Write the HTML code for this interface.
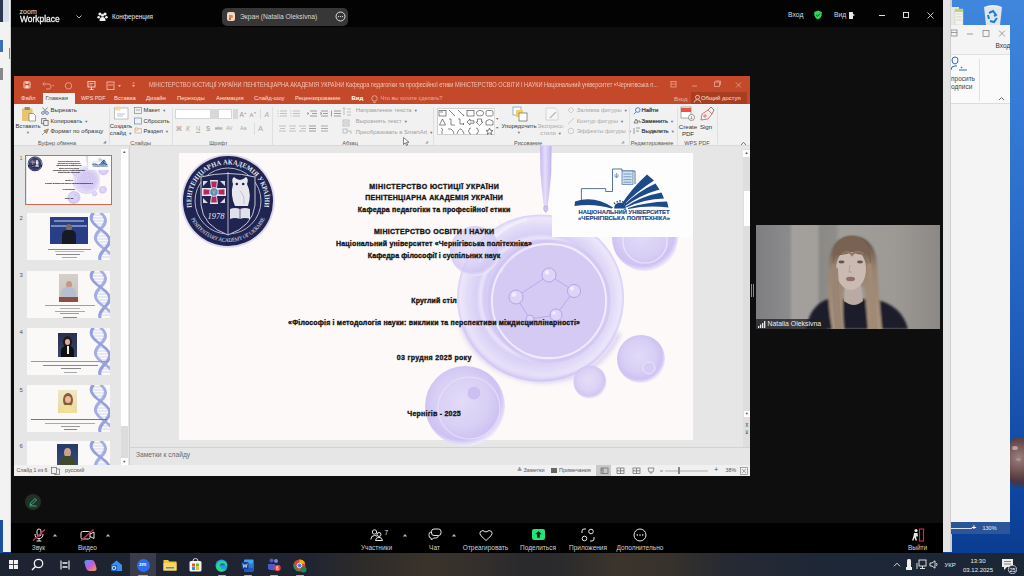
<!DOCTYPE html>
<html><head><meta charset="utf-8">
<style>
*{margin:0;padding:0;box-sizing:border-box}
html,body{width:1024px;height:576px;overflow:hidden;background:#1d5cc0;font-family:"Liberation Sans",sans-serif}
.a{position:absolute}
.t{position:absolute;white-space:nowrap;line-height:1}
/* desktop */
#desk{left:0;top:0;width:1024px;height:576px;background:linear-gradient(180deg,#3f86dc 0%,#2f73cf 30%,#1f5bb8 60%,#0e46a0 85%,#0a3a8c 100%)}
#leftwin{left:0;top:0;width:11px;height:552px;background:#f2f2f2}
#zoom{left:11px;top:0;width:932px;height:553px;background:#0e0e0e}
#ztop{left:11px;top:0;width:932px;height:27px;background:#030303}
#zbot{left:11px;top:523px;width:932px;height:30px;background:#000}
#task{left:0;top:553px;width:1024px;height:23px;background:linear-gradient(90deg,#1d2330 0%,#202432 30%,#2d2a2a 35%,#3a332b 42%,#35302b 46%,#2a2a2d 51%,#2b2b2d 55%,#3a342c 60%,#37322b 65%,#262a33 71%,#1e2736 80%,#1b2637 100%)}
/* ppt */
#ppt{left:14px;top:76px;width:736px;height:400px;background:#e6e6e6;overflow:hidden}
#ptitle{left:0;top:0;width:736px;height:28px;background:#c4492b}
#ribbon{left:0;top:28px;width:736px;height:42px;background:#f1f1f1;border-bottom:1px solid #dadada}
.tab{position:absolute;top:19px;font-size:7px;color:#fbe3dc;white-space:nowrap;line-height:1}
.rb{position:absolute;font-size:6.5px;color:#444;white-space:nowrap;line-height:1}
.rg{position:absolute;font-size:6.5px;color:#666;white-space:nowrap;line-height:1;top:63px}
.sep{position:absolute;top:31px;width:1px;height:38px;background:#dcdcdc}
#thumbs{left:0;top:70px;width:116px;height:319px;background:#e6e6e6}
#slide{left:165px;top:77px;width:514px;height:287px;background:#fcf9f8}
.st{position:absolute;font-weight:bold;color:#161616;-webkit-text-stroke:0.35px #161616;white-space:nowrap;line-height:1;font-size:8px}
#status{left:0;top:389px;width:736px;height:11px;background:#f0f0f0}
/* video */
#video{left:756px;top:225px;width:184px;height:104px;background:#7a7a7a;overflow:hidden}
/* right */
#rstrip{left:943px;top:0;width:8px;height:552px;background:#e4e4e4}
#word{left:951px;top:25px;width:59px;height:509px;background:#f4f4f4;overflow:hidden}
</style></head><body>
<div id="desk" class="a"></div>
<div id="leftwin" class="a"></div>
<div id="zoom" class="a"></div>
<div id="ztop" class="a"></div>
<div id="zbot" class="a"></div>
<div id="task" class="a"></div>
<div class="a" style="left:25px;top:494px;width:16px;height:16px;border-radius:50%;background:#23302a"></div>
<svg class="a" style="left:28px;top:497px" width="10" height="10" viewBox="0 0 10 10"><g fill="none" stroke="#35c27a" stroke-width="0.9"><path d="M2 8 L2.5 6 L7 1.5 L8.5 3 L4 7.5 Z"/><path d="M1.5 9 L8.5 9"/></g></svg>
<svg class="a" style="left:32px;top:528px" width="14" height="14" viewBox="0 0 14 14"><g fill="none" stroke="#e6e6e6" stroke-width="1"><rect x="5" y="1" width="4" height="7" rx="2"/><path d="M3 6 Q3 10.5 7 10.5 Q11 10.5 11 6 M7 10.5 L7 13 M4.5 13 L9.5 13"/></g><path d="M1 12.5 L13 1.5" stroke="#e0245e" stroke-width="1.3"/></svg>
<svg class="a" style="left:52.0px;top:532.7px" width="6" height="4" viewBox="0 0 6 4"><path d="M0.8 3.5 L3 1 L5.2 3.5 Z" fill="#b8b8b8"/></svg>
<div class="t" style="left:38.5px;top:547.5px;font-size:6.5px;color:#d2d2d2;transform:translate(-50%,-50%)">Звук</div>
<svg class="a" style="left:80px;top:528px" width="15" height="14" viewBox="0 0 15 14"><g fill="none" stroke="#e6e6e6" stroke-width="1"><rect x="1" y="3.5" width="9" height="7.5" rx="1.5"/><path d="M10 6 L14 4 L14 10.5 L10 8.5"/></g><path d="M1 12.5 L13.5 1.5" stroke="#e0245e" stroke-width="1.3"/></svg>
<svg class="a" style="left:105.0px;top:532.7px" width="6" height="4" viewBox="0 0 6 4"><path d="M0.8 3.5 L3 1 L5.2 3.5 Z" fill="#b8b8b8"/></svg>
<div class="t" style="left:87.5px;top:547.5px;font-size:6.5px;color:#d2d2d2;transform:translate(-50%,-50%)">Видео</div>
<svg class="a" style="left:370px;top:529px" width="14" height="12" viewBox="0 0 14 12"><g fill="none" stroke="#e6e6e6" stroke-width="1"><circle cx="4.5" cy="3" r="2.2"/><path d="M0.8 10.5 Q1 6.5 4.5 6.5 Q6 6.5 7 7.3"/><circle cx="9" cy="5.5" r="2"/><path d="M5.5 11.5 Q5.8 8.3 9 8.3 Q12.2 8.3 12.5 11.5 Z"/></g></svg>
<div class="t" style="left:384.5px;top:529.5px;font-size:6.5px;color:#e4e4e4">7</div>
<svg class="a" style="left:402.0px;top:532.7px" width="6" height="4" viewBox="0 0 6 4"><path d="M0.8 3.5 L3 1 L5.2 3.5 Z" fill="#b8b8b8"/></svg>
<div class="t" style="left:376.5px;top:547.5px;font-size:6.5px;color:#d2d2d2;transform:translate(-50%,-50%)">Участники</div>
<svg class="a" style="left:428px;top:528px" width="14" height="13" viewBox="0 0 14 13"><g fill="none" stroke="#e6e6e6" stroke-width="1"><rect x="3.5" y="1" width="9.5" height="6.5" rx="2.5"/><path d="M3 4 Q1 4 1 6.5 L1 7.5 Q1 10 3 10 L3.5 12 L5.5 10 L8 10 Q10 10 10.3 8"/></g></svg>
<svg class="a" style="left:450.5px;top:532.7px" width="6" height="4" viewBox="0 0 6 4"><path d="M0.8 3.5 L3 1 L5.2 3.5 Z" fill="#b8b8b8"/></svg>
<div class="t" style="left:434.5px;top:547.5px;font-size:6.5px;color:#d2d2d2;transform:translate(-50%,-50%)">Чат</div>
<svg class="a" style="left:478.5px;top:528.5px" width="14" height="13" viewBox="0 0 14 13"><path d="M7 11.5 L2 6.8 Q0 4.5 1.5 2.5 Q3.5 0.3 7 3 Q10.5 0.3 12.5 2.5 Q14 4.5 12 6.8 Z" fill="none" stroke="#e6e6e6" stroke-width="1"/></svg>
<div class="t" style="left:485.5px;top:547.5px;font-size:6.5px;color:#d2d2d2;transform:translate(-50%,-50%)">Отреагировать</div>
<div class="a" style="left:531.5px;top:529px;width:13px;height:11px;background:#2bdf78;border-radius:2px"></div>
<svg class="a" style="left:533.5px;top:530px" width="9" height="9" viewBox="0 0 9 9"><path d="M4.5 1 L1.3 4.2 L3.2 4.2 L3.2 7.8 L5.8 7.8 L5.8 4.2 L7.7 4.2 Z" fill="#0a2a14"/></svg>
<div class="t" style="left:538px;top:547.5px;font-size:6.5px;color:#d2d2d2;transform:translate(-50%,-50%)">Поделиться</div>
<svg class="a" style="left:581px;top:528px" width="14" height="14" viewBox="0 0 14 14"><g fill="none" stroke="#e6e6e6" stroke-width="1"><circle cx="10" cy="3.5" r="2.3"/><circle cx="3.5" cy="10.5" r="2.3"/><path d="M1 5 L1 3 Q1 1 3 1 L5 1 M13 9 L13 11 Q13 13 11 13 L9 13"/></g></svg>
<div class="t" style="left:588px;top:547.5px;font-size:6.5px;color:#d2d2d2;transform:translate(-50%,-50%)">Приложения</div>
<svg class="a" style="left:633px;top:528px" width="14" height="14" viewBox="0 0 14 14"><circle cx="7" cy="7" r="6" fill="none" stroke="#e6e6e6" stroke-width="1"/><g fill="#e6e6e6"><circle cx="4.3" cy="7" r="0.8"/><circle cx="7" cy="7" r="0.8"/><circle cx="9.7" cy="7" r="0.8"/></g></svg>
<div class="t" style="left:640px;top:547.5px;font-size:6.5px;color:#d2d2d2;transform:translate(-50%,-50%)">Дополнительно</div>
<svg class="a" style="left:911px;top:528px" width="14" height="14" viewBox="0 0 14 14"><rect x="8.5" y="1" width="4" height="12" fill="none" stroke="#e0245e" stroke-width="1.1"/><g fill="#e6e6e6"><circle cx="5" cy="2.5" r="1.6"/><path d="M3 5 L6.5 5 L7 8.5 L5 8.5 L6 12.5 L4.5 12.5 L3.5 9.5 L2.5 12.5 L1 12.5 L2.5 8 Z"/></g></svg>
<div class="t" style="left:917.5px;top:547.5px;font-size:6.5px;color:#d2d2d2;transform:translate(-50%,-50%)">Выйти</div>
<div class="a" style="left:130px;top:553px;width:26px;height:23px;background:rgba(255,255,255,0.12)"></div>
<svg class="a" style="left:8.8px;top:560.3px" width="9" height="9" viewBox="0 0 9 9"><g fill="#f2f2f2"><rect x="0" y="0" width="4.1" height="4.1"/><rect x="4.9" y="0" width="4.1" height="4.1"/><rect x="0" y="4.9" width="4.1" height="4.1"/><rect x="4.9" y="4.9" width="4.1" height="4.1"/></g></svg>
<svg class="a" style="left:31px;top:558px" width="13" height="13" viewBox="0 0 13 13"><circle cx="7.5" cy="5.5" r="4.2" fill="none" stroke="#f2f2f2" stroke-width="1.3"/><path d="M4.5 8.5 L1 12" stroke="#f2f2f2" stroke-width="1.5"/></svg>
<svg class="a" style="left:59.5px;top:560px" width="10" height="10" viewBox="0 0 10 10"><g fill="none" stroke="#f2f2f2" stroke-width="1.1"><path d="M1 0.5 L1 9.5 M9 0.5 L9 9.5"/><path d="M2.5 3 L7.5 3 M2.5 7 L7.5 7" stroke-width="1.6"/></g></svg>
<svg class="a" style="left:84px;top:558.5px" width="13" height="13" viewBox="0 0 13 13"><defs><linearGradient id="cop" x1="0" y1="0" x2="1" y2="1"><stop offset="0" stop-color="#3aa0ff"/><stop offset="0.5" stop-color="#c85bd9"/><stop offset="1" stop-color="#f7a23a"/></linearGradient></defs><path d="M3 1 L8 1 Q10 1 11 4 L12.5 9 Q13 12 10 12 L5 12 Q3 12 2 9 L0.5 4 Q0 1 3 1 Z" fill="url(#cop)"/></svg>
<svg class="a" style="left:110px;top:558.5px" width="13" height="13" viewBox="0 0 13 13"><path d="M1 6 L6.5 1.5 L12 6 L12 12 L1 12 Z" fill="#3c8ee6"/><rect x="1" y="6" width="6" height="6" fill="#1462c8"/><circle cx="4" cy="9" r="1.8" fill="none" stroke="#fff" stroke-width="0.8"/></svg>
<div class="a" style="left:137px;top:558.5px;width:13px;height:13px;border-radius:50%;background:#2d6df0"></div><div class="t" style="left:139.3px;top:562px;font-size:5px;color:#fff;font-weight:bold">zm</div>
<svg class="a" style="left:163px;top:559px" width="14" height="12" viewBox="0 0 14 12"><path d="M0.5 1 L5 1 L6.5 2.5 L13.5 2.5 L13.5 11.5 L0.5 11.5 Z" fill="#f3c440"/><rect x="0.5" y="4" width="13" height="7.5" fill="#ffd75e"/><rect x="3" y="8" width="8" height="1.5" fill="#3a8ee6"/></svg>
<svg class="a" style="left:189px;top:558px" width="13" height="14" viewBox="0 0 13 14"><path d="M4 3 Q4 0.5 6.5 0.5 Q9 0.5 9 3" fill="none" stroke="#ddd" stroke-width="1"/><rect x="0.5" y="3" width="12" height="10.5" rx="1.5" fill="#f4f4f4"/><rect x="3" y="5.5" width="3" height="3" fill="#f25022"/><rect x="7" y="5.5" width="3" height="3" fill="#7fba00"/><rect x="3" y="9" width="3" height="3" fill="#00a4ef"/><rect x="7" y="9" width="3" height="3" fill="#ffb900"/></svg>
<svg class="a" style="left:215px;top:558.5px" width="13" height="13" viewBox="0 0 13 13"><circle cx="6.5" cy="6.5" r="6" fill="#1ea0db"/><path d="M1 8 Q2 2 7 2 Q12 2 12.3 6.5 L5 6.5 Q5 10 9 10.5 Q11 10.5 12 9.5 Q10 12.8 6.5 12.8 Q2 12.5 1 8 Z" fill="#2fd38a"/><path d="M4.5 6.5 Q5 4 8 4.2 Q10 4.5 10.2 6.5 Z" fill="#0d6fb8"/></svg>
<svg class="a" style="left:241px;top:558.5px" width="13" height="13" viewBox="0 0 13 13"><rect x="3" y="0.5" width="9.5" height="12" rx="1" fill="#41a5ee"/><rect x="3" y="4.5" width="9.5" height="4" fill="#2b7cd3"/><rect x="3" y="8.5" width="9.5" height="4" fill="#185abd"/><rect x="0.5" y="3" width="7" height="7" rx="0.8" fill="#103f91"/><path d="M1.8 4.5 L2.8 8.5 L4 5.5 L5.2 8.5 L6.2 4.5" stroke="#fff" stroke-width="0.7" fill="none"/></svg>
<svg class="a" style="left:267px;top:558px" width="14" height="14" viewBox="0 0 14 14"><circle cx="9" cy="3" r="2" fill="#7b83eb"/><circle cx="4.5" cy="2.5" r="2" fill="#5059c9"/><path d="M1 6 L8 6 L8 12 Q4.5 13 1 11 Z" fill="#5059c9"/><circle cx="10.5" cy="10" r="3.3" fill="#e13e3e"/><text x="10.5" y="12" font-size="5" text-anchor="middle" fill="#fff" font-family="Liberation Sans">6</text></svg>
<svg class="a" style="left:293px;top:558.5px" width="14" height="14" viewBox="0 0 14 14"><circle cx="6.5" cy="6.5" r="6" fill="#db4437"/><path d="M6.5 0.5 A6 6 0 0 1 12.2 4.8 L6.5 4.8 Z" fill="#f4b400"/><path d="M0.8 4.5 L4 10 L6.5 12.5 A6 6 0 0 1 0.8 4.5 Z" fill="#0f9d58"/><circle cx="6.5" cy="6.5" r="2.4" fill="#4285f4" stroke="#fff" stroke-width="0.8"/><circle cx="10.5" cy="10.5" r="3" fill="#1a8a5a"/></svg>
<div class="a" style="left:138.0px;top:574.5px;width:10px;height:1.5px;background:#aab;border-radius:1px"></div>
<div class="a" style="left:217.5px;top:574.5px;width:8px;height:1.5px;background:#aab;border-radius:1px"></div>
<div class="a" style="left:243.5px;top:574.5px;width:8px;height:1.5px;background:#aab;border-radius:1px"></div>
<div class="a" style="left:270.0px;top:574.5px;width:8px;height:1.5px;background:#aab;border-radius:1px"></div>
<div class="a" style="left:296.0px;top:574.5px;width:8px;height:1.5px;background:#aab;border-radius:1px"></div>
<svg class="a" style="left:893px;top:562px" width="8" height="5" viewBox="0 0 8 5"><path d="M1 4.3 L4 1.2 L7 4.3" stroke="#eee" stroke-width="0.9" fill="none"/></svg>
<div class="a" style="left:907px;top:558.5px;width:4px;height:8px;background:#eee;border-radius:1.5px 1.5px 0 0"></div><div class="a" style="left:906px;top:566.5px;width:6px;height:3px;background:#eee"></div>
<svg class="a" style="left:916px;top:559px" width="11" height="11" viewBox="0 0 11 11"><g fill="none" stroke="#eee" stroke-width="0.9"><rect x="3" y="1" width="7" height="6"/><path d="M6.5 7 L6.5 9.5 M4 9.5 L9 9.5 M1 4 L1 10"/></g></svg>
<svg class="a" style="left:929px;top:560px" width="10" height="9" viewBox="0 0 10 9"><g fill="none" stroke="#eee" stroke-width="0.9"><path d="M1 3 L3 3 L6 0.8 L6 8.2 L3 6 L1 6 Z"/><path d="M7.5 3 Q8.5 4.5 7.5 6"/></g></svg>
<div class="t" style="left:944.5px;top:562px;font-size:6px;color:#eee">УКР</div>
<div class="t" style="left:978px;top:560.5px;font-size:6px;color:#eee;transform:translate(-50%,-50%)">13:30</div>
<div class="t" style="left:978px;top:569.5px;font-size:6px;color:#eee;transform:translate(-50%,-50%)">03.12.2025</div>
<svg class="a" style="left:1001px;top:558px" width="16" height="16" viewBox="0 0 16 16"><path d="M1 1 L12 1 L12 9 L6 9 L3 12 L3 9 L1 9 Z" fill="#eee"/><path d="M3 3.5 L10 3.5 M3 6 L10 6" stroke="#555" stroke-width="0.7"/><circle cx="11.5" cy="11.5" r="4.2" fill="#2a3040" stroke="#eee" stroke-width="0.7"/><text x="11.5" y="13.6" font-size="5.5" text-anchor="middle" fill="#fff" font-family="Liberation Sans">25</text></svg>

<!-- zoom top bar -->
<div class="t" style="left:19.5px;top:7.8px;font-size:7px;color:#eee;letter-spacing:0.1px">zoom</div>
<div class="t" style="left:19.5px;top:14.3px;font-size:9.6px;color:#f4f4f4;transform:scaleX(0.88);transform-origin:0 0;-webkit-text-stroke:0.3px #f4f4f4">Workplace</div>
<svg class="a" style="left:75px;top:14px" width="8" height="6" viewBox="0 0 8 6"><path d="M1.5 1.5 L4 4 L6.5 1.5" stroke="#bbb" stroke-width="1" fill="none"/></svg>
<svg class="a" style="left:97px;top:11px" width="11" height="11" viewBox="0 0 11 11"><g fill="#f0f0f0"><circle cx="3" cy="3" r="1.6"/><circle cx="8" cy="3" r="1.6"/><circle cx="5.5" cy="4.2" r="1.5"/><circle cx="1.6" cy="6.3" r="1.3"/><circle cx="9.4" cy="6.3" r="1.3"/><path d="M2.5 10 Q2.5 6 5.5 6 Q8.5 6 8.5 10 Z"/></g></svg>
<div class="t" style="left:112px;top:14px;font-size:6.4px;color:#e8e8e8">Конференция</div>
<div class="a" style="left:222px;top:8px;width:126px;height:18px;background:#373737;border-radius:5px"></div>
<div class="a" style="left:226.5px;top:12.3px;width:8.6px;height:9px;background:#f1d6c2;border-radius:2px"></div>
<div class="a" style="left:229px;top:15px;width:2px;height:5px;background:#c8653e"></div><div class="a" style="left:229px;top:15px;width:4px;height:3px;background:#d9875f;border-radius:0 1.5px 1.5px 0"></div>
<div class="t" style="left:240px;top:14px;font-size:6.7px;color:#d8d8d8">Экран (Natalia Oleksivna)</div>
<svg class="a" style="left:335px;top:11px" width="11" height="11" viewBox="0 0 11 11"><circle cx="5.5" cy="5.5" r="4.5" stroke="#eee" stroke-width="0.9" fill="none"/><circle cx="3.5" cy="5.6" r="0.6" fill="#eee"/><circle cx="5.5" cy="5.6" r="0.6" fill="#eee"/><circle cx="7.5" cy="5.6" r="0.6" fill="#eee"/></svg>
<div class="t" style="left:788px;top:12px;font-size:6.8px;color:#ddd">Вход</div>
<svg class="a" style="left:813px;top:10px" width="10" height="10" viewBox="0 0 10 10"><path d="M5 0.6 L8.8 2 L8.6 5.5 Q8 8.2 5 9.6 Q2 8.2 1.4 5.5 L1.2 2 Z" fill="#2ed35a"/><path d="M3.2 5 L4.5 6.3 L6.9 3.8" stroke="#0b3d17" stroke-width="1" fill="none"/></svg>
<div class="t" style="left:834px;top:12px;font-size:6.8px;color:#ddd">Вид</div>
<div class="a" style="left:849px;top:12px;width:4px;height:7px;background:#e8e8e8;border-radius:0.5px"></div>
<div class="a" style="left:853px;top:14px;width:0;height:0;border-top:1.5px solid transparent;border-bottom:1.5px solid transparent;border-left:2px solid #e8e8e8"></div>
<div class="a" style="left:879px;top:15px;width:6px;height:1px;background:#ddd"></div>
<div class="a" style="left:903px;top:12px;width:6px;height:6px;border:1px solid #ddd"></div>
<svg class="a" style="left:927px;top:12px" width="7" height="7" viewBox="0 0 7 7"><path d="M0.5 0.5 L6.5 6.5 M6.5 0.5 L0.5 6.5" stroke="#ddd" stroke-width="0.9"/></svg>


<div id="ppt" class="a">
  <div id="ptitle" class="a"></div>

<svg class="a" style="left:8px;top:4px" width="130" height="11" viewBox="0 0 130 11">
 <g fill="none" stroke="#f8ddd4" stroke-width="0.9">
  <rect x="2" y="1.8" width="6" height="6.2" rx="0.6" fill="none" stroke="#f8ddd4"/><rect x="3.5" y="1.8" width="3" height="2" fill="#f8ddd4" stroke="none"/><rect x="3.3" y="5.2" width="3.4" height="2.8" fill="#f8ddd4" stroke="none"/>
  <path d="M21 4 L27 4 Q29 4 29 6.5 Q29 9 27 9 L24 9" stroke="#e9a58f"/>
  <path d="M22.5 2.3 L20.8 4 L22.5 5.7" stroke="#e9a58f"/>
  <path d="M30.5 5.5 L32 5.5" stroke="#e9a58f"/>
  <circle cx="46.5" cy="5.8" r="3.2" stroke="#e9a58f"/>
  <rect x="66" y="1.5" width="7" height="5.5" fill="none" stroke="#f8ddd4"/><path d="M67.5 3.5 L71.5 3.5 M67.5 5 L70 5" stroke="#f8ddd4" stroke-width="0.6"/>
  <path d="M69.5 7 L69.5 9.5 M67.5 9.5 L71.5 9.5" stroke="#f8ddd4"/>
  <rect x="85" y="2" width="7" height="7.5" stroke="#f0bba9"/>
  <path d="M86 5 L91 5" stroke="#f0bba9"/>
  <path d="M96 5 L99 5 L97.5 7 Z" fill="#f0bba9" stroke="none"/>
  <path d="M110 5 L113 5 L111.5 7 Z" fill="#f0bba9" stroke="none"/>
  <path d="M110.5 3 L112.5 3" stroke="#f0bba9"/>
 </g>
</svg>
<div class="t" style="left:135px;top:6.3px;font-size:6.3px;color:#f1c2b2;letter-spacing:-0.05px;transform:scaleX(0.903);transform-origin:0 0">МІНІСТЕРСТВО ЮСТИЦІЇ УКРАЇНИ ПЕНІТЕНЦІАРНА АКАДЕМІЯ УКРАЇНИ Кафедра педагогіки та професійної етики МІНІСТЕРСТВО ОСВІТИ І НАУКИ Національний університет «Чернігівська п...</div>
<svg class="a" style="left:652px;top:3px" width="84" height="11" viewBox="0 0 84 11">
 <g fill="none" stroke="#e6a794" stroke-width="0.8">
  <rect x="5" y="2.5" width="5" height="5.5"/><path d="M5 5 L10 5"/>
  <path d="M26 7 L31 7"/>
  <rect x="48.5" y="3" width="5" height="4.5"/><path d="M49.5 2 L54.5 2 L54.5 6"/>
  <path d="M70 3.5 L75 8.5 M75 3.5 L70 8.5"/>
 </g>
</svg>
<div class="a" style="left:676.5px;top:16px;width:56px;height:12px;background:#a93d22"></div>
<svg class="a" style="left:679px;top:17.5px" width="9" height="9" viewBox="0 0 10 10"><g fill="none" stroke="#f5d5ca" stroke-width="0.9"><circle cx="5" cy="3.6" r="2.2"/><path d="M1.3 9.5 Q1.5 6.3 5 6.3 Q8.5 6.3 8.7 9.5"/></g></svg>
<div class="t" style="left:687px;top:19.5px;font-size:5.9px;color:#f8e2da">Общий доступ</div>
<div class="t" style="left:660px;top:19.5px;font-size:6px;color:#f0b4a2">Вход</div>

<div class="a" style="left:29px;top:16.5px;width:32px;height:11.5px;background:#f1f1f1"></div>
<div class="tab" style="left:7px;color:#fbe0d7;font-size:5.9px;top:20px">Файл</div>
<div class="tab" style="left:31.5px;color:#444;font-size:5.9px;top:20px">Главная</div>
<div class="tab" style="left:67px;color:#fbe0d7;font-size:5.4px;top:20.3px">WPS PDF</div>
<div class="tab" style="left:100px;color:#fbe0d7;font-size:5.9px;top:20px">Вставка</div>
<div class="tab" style="left:132px;color:#fbe0d7;font-size:5.9px;top:20px">Дизайн</div>
<div class="tab" style="left:163px;color:#fbe0d7;font-size:5.9px;top:20px">Переходы</div>
<div class="tab" style="left:202px;color:#fbe0d7;font-size:5.9px;top:20px">Анимация</div>
<div class="tab" style="left:240px;color:#fbe0d7;font-size:5.9px;top:20px">Слайд-шоу</div>
<div class="tab" style="left:281px;color:#fbe0d7;font-size:5.9px;top:20px">Рецензирование</div>
<div class="tab" style="left:337.5px;top:20px;font-size:5.9px;color:#fff;font-weight:bold">Вид</div>
<svg class="a" style="left:357px;top:18.5px" width="7" height="9" viewBox="0 0 7 9"><g fill="none" stroke="#efb09c" stroke-width="0.8"><path d="M2 6 Q0.6 4.6 0.8 3.2 Q1 0.7 3.5 0.7 Q6 0.7 6.2 3.2 Q6.4 4.6 5 6 Z"/><path d="M2.3 7.6 L4.7 7.6"/></g></svg>
<div class="tab" style="left:366.5px;top:20px;font-size:5.6px;color:#efb09c">Что вы хотите сделать?</div>
  <div id="ribbon" class="a"></div>
<svg class="a" style="left:7px;top:30px" width="16" height="16" viewBox="0 0 16 16"><rect x="1" y="2.5" width="10.5" height="12.5" rx="1" fill="#e8c46f"/><rect x="3.5" y="1" width="5.5" height="3" rx="0.8" fill="#9a8a6a"/><path d="M8 7.5 L12.5 7.5 L14.5 9.5 L14.5 15 L8 15 Z" fill="#fff" stroke="#666" stroke-width="0.6"/></svg>
<div class="t" style="left:14px;top:51px;font-size:5.9px;color:#333;transform:translate(-50%,-50%);">Вставить</div>
<div class="t" style="left:14px;top:57.5px;font-size:3.8px;color:#777;transform:translate(-50%,-50%);">▼</div>
<svg class="a" style="left:27px;top:31px" width="8" height="8" viewBox="0 0 8 8"><g fill="none" stroke="#5b6f8e" stroke-width="0.8"><circle cx="2" cy="6" r="1.4"/><circle cx="6" cy="6" r="1.4"/><path d="M2.8 4.9 L6.5 0.5 M5.2 4.9 L1.5 0.5"/></g></svg>
<div class="t" style="left:36.5px;top:35px;font-size:5.9px;color:#333;transform:translateY(-50%);">Вырезать</div>
<svg class="a" style="left:27px;top:41.5px" width="8" height="8" viewBox="0 0 8 8"><g fill="none" stroke="#555" stroke-width="0.7"><rect x="0.7" y="0.7" width="4.3" height="5"/><rect x="2.8" y="2.6" width="4.3" height="5" fill="#f1f1f1"/></g></svg>
<div class="t" style="left:36.5px;top:46px;font-size:5.9px;color:#333;transform:translateY(-50%);">Копировать<span style="font-size:4px;color:#777;margin-left:2px">▼</span></div>
<svg class="a" style="left:27px;top:52px" width="8" height="8" viewBox="0 0 8 8"><path d="M1 7 L4 4 L5.5 5.5 L7.5 1 L3 2.5 L4 4" fill="#c9a241" stroke="#555" stroke-width="0.5"/></svg>
<div class="t" style="left:36.5px;top:56.3px;font-size:5.9px;color:#333;transform:translateY(-50%);">Формат по образцу</div>
<div class="t" style="left:43px;top:67.5px;font-size:5.6px;color:#555;transform:translate(-50%,-50%);">Буфер обмена</div>
<div class="t" style="left:89px;top:64px;font-size:4px;color:#888">◢</div>
<div class="a" style="left:94.5px;top:31px;width:1px;height:38px;background:#e0e0e0"></div>
<svg class="a" style="left:100px;top:30px" width="15" height="15" viewBox="0 0 15 15"><rect x="0.5" y="2" width="13.5" height="11" fill="#fff" stroke="#999" stroke-width="0.6"/><rect x="1.5" y="0.5" width="5" height="4" fill="#f3d8a7"/><path d="M3 8 L11 8 M3 10 L9 10" stroke="#9ab" stroke-width="0.7"/></svg>
<div class="t" style="left:107px;top:51px;font-size:5.9px;color:#333;transform:translate(-50%,-50%);">Создать</div>
<div class="t" style="left:107px;top:58px;font-size:5.9px;color:#333;transform:translate(-50%,-50%);">слайд<span style="font-size:4px;color:#777;margin-left:2px">▼</span></div>
<svg class="a" style="left:120px;top:31px" width="8" height="30" viewBox="0 0 8 30"><g fill="none" stroke="#777" stroke-width="0.6"><rect x="0.5" y="0.5" width="7" height="6"/><path d="M2 3 L6 3"/><rect x="0.5" y="11" width="7" height="6" stroke="#5575a5"/><path d="M1 21 L4 21 L4 23 L1 23 Z M4.5 21.5 L7.5 21.5 L7.5 26 L1 26 L1 23" stroke="#c9a06a"/></g></svg>
<div class="t" style="left:129.5px;top:35px;font-size:5.9px;color:#333;transform:translateY(-50%);">Макет<span style="font-size:4px;color:#777;margin-left:2px">▼</span></div>
<div class="t" style="left:129.5px;top:46px;font-size:5.9px;color:#333;transform:translateY(-50%);">Сбросить</div>
<div class="t" style="left:129.5px;top:56.3px;font-size:5.9px;color:#333;transform:translateY(-50%);">Раздел<span style="font-size:4px;color:#777;margin-left:2px">▼</span></div>
<div class="t" style="left:126.6px;top:67.5px;font-size:5.6px;color:#555;transform:translate(-50%,-50%);">Слайды</div>
<div class="a" style="left:158px;top:31px;width:1px;height:38px;background:#e0e0e0"></div>
<div class="a" style="left:160.7px;top:33.4px;width:36.7px;height:10px;background:#fff;border:0.5px solid #d6d6d6"></div>
<div class="a" style="left:197.4px;top:33.4px;width:6.3px;height:10px;background:#d8d8d8"></div>
<div class="a" style="left:203.7px;top:33.4px;width:14.8px;height:10px;background:#fff;border:0.5px solid #d6d6d6"></div>
<div class="a" style="left:218.5px;top:33.4px;width:5.5px;height:10px;background:#d8d8d8"></div>
<div class="t" style="left:225.5px;top:38.5px;font-size:6.5px;color:#999;transform:translateY(-50%);">A<sup style='font-size:3px'>▲</sup></div>
<div class="t" style="left:235.5px;top:38.5px;font-size:6px;color:#999;transform:translateY(-50%);">A<sup style='font-size:3px'>▼</sup></div>
<div class="a" style="left:245.5px;top:33px;width:1px;height:10px;background:#dcdcdc"></div>
<div class="t" style="left:250.5px;top:38.5px;font-size:6.8px;color:#aaa;transform:translateY(-50%);"><i>A</i></div>
<div class="t" style="left:162px;top:53px;font-size:6.4px;color:#aaa;transform:translateY(-50%);font-weight:bold">Ж</div>
<div class="t" style="left:172px;top:53px;font-size:6.4px;color:#aaa;transform:translateY(-50%);font-style:italic">К</div>
<div class="t" style="left:182px;top:53px;font-size:6.4px;color:#aaa;transform:translateY(-50%);text-decoration:underline">Ч</div>
<div class="t" style="left:192px;top:53px;font-size:6.4px;color:#aaa;transform:translateY(-50%);font-weight:bold">S</div>
<div class="t" style="left:201px;top:53px;font-size:6.4px;color:#aaa;transform:translateY(-50%);text-decoration:line-through;font-size:4.6px">abc</div>
<div class="t" style="left:212px;top:53px;font-size:6.4px;color:#aaa;transform:translateY(-50%);font-size:5.2px">AV</div>
<div class="t" style="left:226px;top:53px;font-size:6.4px;color:#aaa;transform:translateY(-50%);font-size:5.4px">Aa</div>
<div class="a" style="left:240px;top:47px;width:1px;height:12px;background:#dcdcdc"></div>
<div class="t" style="left:244px;top:53px;font-size:7.5px;color:#aaa;transform:translateY(-50%);">A</div>
<div class="t" style="left:204.4px;top:67.5px;font-size:5.6px;color:#555;transform:translate(-50%,-50%);">Шрифт</div>
<div class="a" style="left:258px;top:31px;width:1px;height:38px;background:#e0e0e0"></div>
<svg class="a" style="left:263px;top:33px" width="70" height="25" viewBox="0 0 70 25"><g stroke="#b5b5b5" stroke-width="0.8" fill="none"><path d="M3 2 L10 2 M3 4.5 L10 4.5 M3 7 L10 7 M0.5 2 L1.5 2 M0.5 4.5 L1.5 4.5 M0.5 7 L1.5 7"/><path d="M16 2 L23 2 M16 4.5 L23 4.5 M16 7 L23 7 M13.5 2 L14.5 2 M13.5 4.5 L14.5 4.5 M13.5 7 L14.5 7"/><path d="M33 2 L40 2 M35 4.5 L40 4.5 M33 7 L40 7 M30 3.5 L32 4.5 L30 5.5" stroke="#888"/><path d="M44 2 L51 2 M46 4.5 L51 4.5 M44 7 L51 7 M43 3.5 L45 4.5 L43 5.5" stroke="#888"/><path d="M57 2 L64 2 M57 4.5 L64 4.5 M57 7 L64 7 M54.5 1.5 L54.5 7.5" stroke="#888"/><path d="M2 17 L9 17 M3 19.5 L8 19.5 M2 22 L9 22"/><path d="M12 17 L19 17 M13 19.5 L18 19.5 M12 22 L19 22"/><path d="M22 17 L29 17 M24 19.5 L29 19.5 M22 22 L29 22"/><path d="M32 17 L39 17 M32 19.5 L39 19.5 M32 22 L39 22" stroke="#888"/><path d="M44 17 L51 17 M44 19.5 L51 19.5 M44 22 L51 22" stroke="#999"/></g></svg>
<svg class="a" style="left:328px;top:31px" width="10" height="30" viewBox="0 0 10 30"><g fill="none" stroke="#aaa" stroke-width="0.7"><path d="M2 1 L2 8 M0.5 2 L2 0.5 L3.5 2 M5 2 L9 2 M5 5 L9 5 M5 8 L9 8"/><rect x="1" y="13" width="6" height="6"/><path d="M2 15 L6 15 M2 17 L6 17"/><rect x="1" y="22" width="4" height="4"/><path d="M5 24 L9 24 L9 27"/></g></svg>
<div class="t" style="left:341.8px;top:35px;font-size:5.9px;color:#a0a0a0;transform:translateY(-50%);">Направление текста<span style="font-size:4px;color:#777;margin-left:2px">▼</span></div>
<div class="t" style="left:341.8px;top:46px;font-size:5.9px;color:#a0a0a0;transform:translateY(-50%);">Выровнять текст<span style="font-size:4px;color:#777;margin-left:2px">▼</span></div>
<div class="t" style="left:341.8px;top:57px;font-size:5.9px;color:#a0a0a0;transform:translateY(-50%);">Преобразовать в SmartArt<span style="font-size:4px;color:#777;margin-left:2px">▼</span></div>
<div class="t" style="left:336px;top:67.5px;font-size:5.6px;color:#555;transform:translate(-50%,-50%);">Абзац</div>
<svg class="a" style="left:389px;top:61px" width="7" height="9" viewBox="0 0 7 9"><path d="M0.5 0.5 L0.5 7.5 L2.3 5.8 L3.5 8.5 L4.6 8 L3.5 5.3 L6 5.3 Z" fill="#fff" stroke="#333" stroke-width="0.6"/></svg>
<div class="t" style="left:411px;top:64px;font-size:4px;color:#aaa">◢</div>
<div class="a" style="left:419px;top:31px;width:1px;height:38px;background:#e0e0e0"></div>
<div class="a" style="left:423px;top:31.8px;width:62.4px;height:27.2px;background:#fff;border:0.5px solid #d0d0d0"></div>
<svg class="a" style="left:424px;top:32.5px" width="56" height="26" viewBox="0 0 56 26"><g fill="none" stroke="#555" stroke-width="0.7"><rect x="1" y="1.5" width="7" height="5.5"/><path d="M2 3 L5 3"/><path d="M11 1 L17 7"/><path d="M20 1 L26 7 L25 5.5"/><rect x="29" y="1.5" width="7" height="5.5"/><ellipse cx="42" cy="4.2" rx="3.6" ry="2.8"/><rect x="48" y="1.5" width="7" height="5.5" rx="1.5"/><path d="M1.5 16 L4.5 10 L7.5 16 Z"/><path d="M11 10 L13 10 L13 16 L17 16"/><path d="M20 10 L22 10 L22 15 L26 15 M25 14 L26 15 L25 16"/><path d="M29 13 L32 10 L32 11.8 L36 11.8 L36 14.2 L32 14.2 L32 16 Z"/><path d="M39.5 10 L43.5 10 L43.5 13 L45 13 L41.5 16.5 L38 13 L39.5 13 Z"/><path d="M48 16 L48 12 Q51 9 55 12 L55 16 Z"/><path d="M3 19 Q6 20 4 22 L4 25"/><path d="M10 20 Q15 19 16 25"/><path d="M19 25 Q21 19 23 20 Q25 21 26 25"/><path d="M33 19 Q31 19 31 21 Q30 22 31 23 Q31 25 33 25"/><path d="M38 19 Q40 19 40 21 Q41 22 40 23 Q40 25 38 25"/><path d="M51.5 19 L52.5 21.3 L55 21.5 L53 23 L53.8 25.5 L51.5 24 L49.2 25.5 L50 23 L48 21.5 L50.5 21.3 Z"/></g></svg>
<div class="a" style="left:480px;top:31.8px;width:5.4px;height:27.2px;background:#f4f4f4;border-left:0.5px solid #ddd"></div>
<div class="t" style="left:481.5px;top:42px;font-size:3.5px;color:#666">▼</div>
<div class="t" style="left:481.5px;top:51px;font-size:3.5px;color:#666">▼</div>
<svg class="a" style="left:498px;top:30px" width="16" height="16" viewBox="0 0 16 16"><rect x="1" y="1" width="8" height="8" fill="#fff" stroke="#6d8fc9" stroke-width="0.7"/><rect x="4" y="4" width="7" height="7" fill="#f3cf6b"/><rect x="7" y="7" width="8" height="8" fill="#fff" stroke="#666" stroke-width="0.7"/></svg>
<div class="t" style="left:505px;top:51px;font-size:5.9px;color:#333;transform:translate(-50%,-50%);">Упорядочить</div>
<div class="t" style="left:505px;top:57.5px;font-size:3.8px;color:#777;transform:translate(-50%,-50%);">▼</div>
<svg class="a" style="left:530px;top:30px" width="16" height="16" viewBox="0 0 16 16"><path d="M2 2 L11 2 L14 5 L14 14 L2 14 Z" fill="#f6f6f6" stroke="#c6c6c6" stroke-width="0.7"/><path d="M6 12 L12 6" stroke="#bbb" stroke-width="1.4"/></svg>
<div class="t" style="left:537px;top:51px;font-size:5.9px;color:#a8a8a8;transform:translate(-50%,-50%);">Экспресс-</div>
<div class="t" style="left:537px;top:58px;font-size:5.9px;color:#a8a8a8;transform:translate(-50%,-50%);">стили<span style="font-size:4px;color:#777;margin-left:2px">▼</span></div>
<svg class="a" style="left:553px;top:31px" width="8" height="30" viewBox="0 0 8 30"><g fill="none" stroke="#bbb" stroke-width="0.7"><path d="M1 3 L4 0.5 L7 3 L4 6 Z"/><path d="M1 17 L6 12"/><path d="M7 12 L6 11"/><circle cx="4" cy="24" r="2.8"/></g></svg>
<div class="t" style="left:562.7px;top:35px;font-size:5.9px;color:#a8a8a8;transform:translateY(-50%);">Заливка фигуры<span style="font-size:4px;color:#777;margin-left:2px">▼</span></div>
<div class="t" style="left:562.7px;top:45.5px;font-size:5.9px;color:#a8a8a8;transform:translateY(-50%);">Контур фигуры<span style="font-size:4px;color:#777;margin-left:2px">▼</span></div>
<div class="t" style="left:562.7px;top:55.5px;font-size:5.9px;color:#a8a8a8;transform:translateY(-50%);">Эффекты фигуры<span style="font-size:4px;color:#777;margin-left:2px">▼</span></div>
<div class="t" style="left:514px;top:67.5px;font-size:5.6px;color:#555;transform:translate(-50%,-50%);">Рисование</div>
<div class="t" style="left:607px;top:64px;font-size:4px;color:#aaa">◢</div>
<div class="a" style="left:615px;top:31px;width:1px;height:38px;background:#e0e0e0"></div>
<svg class="a" style="left:619px;top:31px" width="8" height="30" viewBox="0 0 8 30"><g fill="none" stroke-width="0.8"><circle cx="4.8" cy="3" r="2.3" stroke="#2f6dc7"/><path d="M3.2 4.8 L0.8 7.2" stroke="#2f6dc7"/><path d="M1 16 L3 12 L5 16 Z M4 14 L7 14 L7 16" stroke="#666"/><path d="M1 21 L1 27 M3 21 L7 21 M3 24 L6 24" stroke="#888"/></g></svg>
<div class="t" style="left:627.5px;top:35px;font-size:5.9px;color:#333;transform:translateY(-50%);"><b style='font-weight:normal;-webkit-text-stroke:0.2px #333'>Найти</b></div>
<div class="t" style="left:627.5px;top:45.5px;font-size:5.9px;color:#444;transform:translateY(-50%);"><b style='font-weight:normal;-webkit-text-stroke:0.2px #333'>Заменить</b><span style="font-size:4px;color:#777;margin-left:2px">▼</span></div>
<div class="t" style="left:627.5px;top:55.5px;font-size:5.9px;color:#444;transform:translateY(-50%);"><b style='font-weight:normal;-webkit-text-stroke:0.2px #333'>Выделить</b><span style="font-size:4px;color:#777;margin-left:2px">▼</span></div>
<div class="t" style="left:638px;top:67.5px;font-size:5.6px;color:#555;transform:translate(-50%,-50%);">Редактирование</div>
<div class="a" style="left:662.5px;top:31px;width:1px;height:38px;background:#e0e0e0"></div>
<svg class="a" style="left:666px;top:30px" width="16" height="16" viewBox="0 0 16 16"><rect x="1" y="1" width="10" height="11" fill="#fff" stroke="#777" stroke-width="0.6"/><rect x="1" y="2" width="10" height="4" fill="#e8534a"/><circle cx="11.5" cy="11.5" r="3" fill="#fff" stroke="#555" stroke-width="0.6"/><path d="M11.5 10 L11.5 13 M10.3 12 L11.5 13 L12.7 12" stroke="#555" stroke-width="0.5" fill="none"/></svg>
<svg class="a" style="left:685px;top:30px" width="16" height="16" viewBox="0 0 16 16"><g fill="none" stroke="#d9544f" stroke-width="0.8"><path d="M2 14 L3 8 L9 4 L13 8 L9 13 Z"/><path d="M9 4 L12 1 L15 4 L13 8" stroke="#666"/><circle cx="6" cy="10" r="1.2"/></g></svg>
<div class="t" style="left:674px;top:50.7px;font-size:6.1px;color:#333;transform:translate(-50%,-50%);">Create</div>
<div class="t" style="left:674px;top:58px;font-size:6.1px;color:#333;transform:translate(-50%,-50%);">PDF</div>
<div class="t" style="left:692px;top:50.7px;font-size:6.1px;color:#333;transform:translate(-50%,-50%);">Sign</div>
<div class="t" style="left:683px;top:67.5px;font-size:5.6px;color:#555;transform:translate(-50%,-50%);">WPS PDF</div>
<div class="a" style="left:702.5px;top:31px;width:1px;height:38px;background:#e0e0e0"></div>
<svg class="a" style="left:725.5px;top:64.5px" width="7" height="5" viewBox="0 0 7 5"><path d="M1 4 L3.5 1.3 L6 4" stroke="#666" stroke-width="0.9" fill="none"/></svg>
  <div id="thumbs" class="a"></div>
<div class="a" style="left:11px;top:78.5px;width:87px;height:50.5px;border:1.3px solid #d2694f"></div>
<div class="a" style="left:12.5px;top:80px;width:84.5px;height:47.5px;background:#fcf9f8;overflow:hidden"><div style="position:absolute;left:0;top:0;width:514px;height:287px;transform:scale(0.1644);transform-origin:0 0">
<svg class="a" style="left:0;top:0;overflow:visible" width="514" height="287" viewBox="0 0 514 287">
 <defs>
  <radialGradient id="t_bg1" cx="0.46" cy="0.44" r="0.56">
   <stop offset="0" stop-color="#e2dbf8"/><stop offset="0.6" stop-color="#d8cff5"/><stop offset="0.86" stop-color="#cdc2f2"/><stop offset="0.94" stop-color="#e0d9f8"/><stop offset="1" stop-color="#efebfc"/>
  </radialGradient>
  <radialGradient id="t_bg2" cx="0.5" cy="0.5" r="0.5">
   <stop offset="0" stop-color="#dcd4f6"/><stop offset="0.68" stop-color="#d6cdf4"/><stop offset="0.72" stop-color="#e9e4fa"/><stop offset="0.77" stop-color="#d9d0f5"/><stop offset="0.88" stop-color="#e3dcf8"/><stop offset="0.96" stop-color="#ece7fb"/><stop offset="1" stop-color="#d8cff5"/>
  </radialGradient>
  <filter id="t_sb" x="-10%" y="-10%" width="120%" height="120%"><feGaussianBlur stdDeviation="0.6"/></filter>
  <filter id="t_sb2" x="-20%" y="-20%" width="140%" height="140%"><feGaussianBlur stdDeviation="2"/></filter>
 </defs>
 <g filter="url(#t_sb)">
 <circle cx="361.5" cy="145" r="83.5" fill="url(#t_bg2)"/>
 <path d="M282 170 Q300 222 362 228 Q420 226 440 180" stroke="#c6b9ef" stroke-width="5" fill="none" opacity="0.6" filter="url(#t_sb2)"/>
 <circle cx="370" cy="148" r="60" fill="none" stroke="#cdc2f2" stroke-width="3" opacity="0.6"/>
 <circle cx="370" cy="148" r="57" fill="#d4caf4" stroke="#f0ecfc" stroke-width="1.8"/>
 <path d="M300 110 Q312 76 348 66" stroke="#f2eefc" stroke-width="3" fill="none" opacity="0.9"/>
 <path d="M322 120 Q330 100 350 95" stroke="#e6e0fa" stroke-width="2" fill="none" opacity="0.7"/>
 <g stroke="#a596df" stroke-width="0.6" fill="none"><path d="M337 144 L370 122 L395 138 L377 162 L351 166 Z"/></g>
 <g fill="#ddd5f7" stroke="#ad9fe6" stroke-width="0.9"><circle cx="370" cy="122" r="7"/><circle cx="395" cy="138" r="6.5"/><circle cx="337" cy="144" r="7"/><circle cx="377" cy="162" r="6"/><circle cx="351" cy="166" r="4"/></g>
 <g fill="#f3f0fd" opacity="0.9"><circle cx="368" cy="119.5" r="2.2"/><circle cx="393" cy="135.5" r="2"/><circle cx="335" cy="141.5" r="2.2"/><circle cx="375" cy="160" r="1.8"/></g>
 <circle cx="296" cy="98" r="25" fill="url(#t_bg1)" opacity="0.75"/>
 <circle cx="466" cy="85" r="33" fill="url(#t_bg1)"/>
 <circle cx="466" cy="88" r="22" fill="none" stroke="#ebe6fb" stroke-width="1.2"/>
 <circle cx="462" cy="206" r="24" fill="url(#t_bg1)"/>
 <circle cx="470" cy="215" r="6" fill="#d6cdf4" stroke="#ebe6fb" stroke-width="1"/>
 <circle cx="411" cy="229" r="16.5" fill="url(#t_bg1)" opacity="0.9"/>
 <circle cx="286" cy="253" r="40" fill="url(#t_bg1)"/>
 <circle cx="290" cy="255" r="31" fill="none" stroke="#e8e2fa" stroke-width="1.2" opacity="0.8"/>
 <circle cx="295" cy="240" r="7" fill="#cbc0f1" stroke="#e3dcf8" stroke-width="0.8"/>
 </g>
</svg>

<svg class="a" style="left:360px;top:-7px" width="14" height="70" viewBox="0 0 14 70"><defs><linearGradient id="pip" x1="0" x2="1"><stop offset="0" stop-color="#c5b8ef"/><stop offset="0.45" stop-color="#e4defa"/><stop offset="1" stop-color="#c0b2ed"/></linearGradient></defs><path d="M1 0 L12.6 0 L12.2 26 Q11 44 8.5 61 L5 61 Q2.6 44 1.4 26 Z" fill="url(#pip)"/><path d="M5 60 Q3.5 64 6.8 66.5 Q10 64 8.5 60 Z" fill="#cfc4f2" stroke="#a99ce0" stroke-width="0.5"/></svg>
<div class="a" style="left:373px;top:0;width:141px;height:83.5px;background:#fdfdfd"></div>
<svg class="a" style="left:395px;top:12px" width="100" height="60" viewBox="0 0 100 60">
 <g fill="none" stroke="#456592" stroke-width="0.9">
  <path d="M7.4 35 L7.4 23.6 L31.7 23.6 L31.7 26.5 L38.5 26.5 L38.5 4 L48 4 L48 6 L61 6 L61 19"/>
 </g>
 <rect x="48" y="6" width="11" height="13.3" fill="#d4e3f3" stroke="#456592" stroke-width="0.7"/>
 <g stroke="#5a86b8" stroke-width="0.8"><path d="M49.5 9 L57.5 9 M49.5 11.8 L57.5 11.8 M49.5 14.6 L57.5 14.6 M49.5 17.2 L57.5 17.2"/></g>
 <path d="M42.5 8 L42.5 13 M41 9 L41 12 L44 12 L44 9" stroke="#3b6fb0" stroke-width="0.6" fill="none"/>
 <g fill="#1c4a8a">
  <path d="M1 36.5 Q20 30 39 42.5 L37.5 43.5 Q20 38 0.5 41 Z"/>
  <path d="M73 9.5 L80 15.5 Q62 27 48.5 41 L47 40 Q58 23 73 9.5 Z"/>
  <path d="M81.5 18.5 L85.5 24.5 Q66 30 50.5 41.5 L49.5 40.5 Q63 27 81.5 18.5 Z"/>
  <path d="M87.5 27.5 L90 33.5 Q70 34 52.5 42.5 L52 41.5 Q68 31 87.5 27.5 Z"/>
  <path d="M93 36.5 L94.5 42.5 Q74 40 54 44 L54 43 Q72 37 93 36.5 Z"/>
  <path d="M40 43.5 A6 6 0 0 1 52 43.5 Z"/>
  <path d="M41 39 L40 37.5 M46 36.8 L46 35 M51 39 L52 37.5 M43.5 37.5 L43 36 M48.5 37.5 L49 36" stroke="#1c4a8a" stroke-width="1.3"/>
 </g>
 <text x="50" y="49.2" text-anchor="middle" font-family="Liberation Sans" font-weight="bold" font-size="5.6" fill="#1f4682" stroke="#1f4682" stroke-width="0.15" textLength="91" lengthAdjust="spacingAndGlyphs">НАЦІОНАЛЬНИЙ УНІВЕРСИТЕТ</text>
 <text x="50" y="55.3" text-anchor="middle" font-family="Liberation Sans" font-weight="bold" font-size="5.6" fill="#1f4682" stroke="#1f4682" stroke-width="0.15" textLength="92" lengthAdjust="spacingAndGlyphs">«ЧЕРНІГІВСЬКА ПОЛІТЕХНІКА»</text>
</svg>
<svg class="a" style="left:1px;top:0px" width="96" height="96" viewBox="-48 -48 96 96">
 <defs><path id="t_arcT" d="M-34.6 12.6 A36.8 36.8 0 1 1 34.6 12.6"/><path id="t_arcB" d="M-39.6 10.6 A41 41 0 0 0 39.6 10.6"/></defs>
 <circle r="46.8" fill="#dcd6ef"/>
 <circle r="45" fill="#1f2450"/>
 <circle r="33" fill="none" stroke="#d6d6e6" stroke-width="0.8"/>
 <text font-family="Liberation Serif" font-size="7" fill="#e8e8f0" font-weight="bold" letter-spacing="0.1"><textPath href="#t_arcT" startOffset="50%" text-anchor="middle" textLength="128" lengthAdjust="spacingAndGlyphs">ПЕНІТЕНЦІАРНА АКАДЕМІЯ УКРАЇНИ</textPath></text>
 <text font-family="Liberation Serif" font-size="5.6" fill="#e8e8f0" letter-spacing="0"><textPath href="#t_arcB" startOffset="50%" text-anchor="middle" textLength="92" lengthAdjust="spacingAndGlyphs">PENITENTIARY ACADEMY OF UKRAINE</textPath></text>
 <path d="M-27 -24 Q0 -31 27 -24 L27 4 Q25 25 0 34 Q-25 25 -27 4 Z" fill="#1f2450" stroke="#d8d8e8" stroke-width="0.9"/>
 <path d="M0 -29 L0 34" stroke="#d8d8e8" stroke-width="0.8"/>
 <g transform="translate(-14,-9)">
  <path d="M-4 -12 L4 -12 L3 -4 L12 -4 L12 4 L3 4 L4 12 L-4 12 L-3 4 L-12 4 L-12 -4 L-3 -4 Z" fill="#e6e6ee"/>
  <path d="M-2.8 -10.5 L2.8 -10.5 L2 -2 L10.5 -2.8 L10.5 2.8 L2 2 L2.8 10.5 L-2.8 10.5 L-2 2 L-10.5 2.8 L-10.5 -2.8 L-2 -2 Z" fill="#b32a5c"/>
  <path d="M-11 -11 L-6 -11 L-11 -6 Z M11 -11 L6 -11 L11 -6 Z M-11 11 L-6 11 L-11 6 Z M11 11 L6 11 L11 6 Z" fill="#d8d8e4"/>
  <circle r="4.3" fill="#4f8fd0" stroke="#e6e6ee" stroke-width="0.9"/>
  <path d="M-1.4 -2 L0 2 L1.4 -2" stroke="#e2c24a" stroke-width="0.7" fill="none"/>
 </g>
 <text x="-12" y="18" text-anchor="middle" font-family="Liberation Serif" font-style="italic" font-size="8.5" fill="#e8e8f0">1978</text>
 <path d="M5 -17 Q3 -22 6 -24 Q9 -21 12 -21 Q15 -21 18 -24 Q21 -22 19 -17 Q24 -7 20 5 L7 5 Q2 -6 5 -17 Z" fill="#e8e8ee"/>
 <path d="M12 -10 Q17 -5 16 3" stroke="#b8b8c8" stroke-width="0.8" fill="none"/>
 <circle cx="8.8" cy="-17" r="1.3" fill="#1f2450"/><circle cx="15.2" cy="-17" r="1.3" fill="#1f2450"/>
 <path d="M2 8 Q7 6 12 8 Q17 6 22 8 L22 18 Q17 16 12 18 Q7 16 2 18 Z" fill="#e0e0e8"/>
 <path d="M12 8 L12 18" stroke="#1f2450" stroke-width="0.6"/>
</svg>
<div class="st" style="left:255px;top:33px;font-size:7.0px;transform:translate(-50%,-50%);letter-spacing:0.481px;text-indent:0.481px">МІНІСТЕРСТВО ЮСТИЦІЇ УКРАЇНИ</div>
<div class="st" style="left:255px;top:44.3px;font-size:7.0px;transform:translate(-50%,-50%);letter-spacing:0.322px;text-indent:0.322px">ПЕНІТЕНЦІАРНА АКАДЕМІЯ УКРАЇНИ</div>
<div class="st" style="left:255px;top:56px;font-size:7.0px;transform:translate(-50%,-50%);letter-spacing:0.206px;text-indent:0.206px">Кафедра педагогіки та професійної етики</div>
<div class="st" style="left:255px;top:78px;font-size:7.0px;transform:translate(-50%,-50%);letter-spacing:0.368px;text-indent:0.368px">МІНІСТЕРСТВО ОСВІТИ І НАУКИ</div>
<div class="st" style="left:255px;top:90px;font-size:7.0px;transform:translate(-50%,-50%);letter-spacing:0.170px;text-indent:0.170px">Національний університет «Чернігівська політехніка»</div>
<div class="st" style="left:255px;top:101.7px;font-size:7.0px;transform:translate(-50%,-50%);letter-spacing:0.080px;text-indent:0.080px">Кафедра філософії і суспільних наук</div>
<div class="st" style="left:255px;top:147px;font-size:7.0px;transform:translate(-50%,-50%);letter-spacing:0.150px;text-indent:0.150px">Круглий стіл</div>
<div class="st" style="left:255px;top:169px;font-size:7.0px;transform:translate(-50%,-50%);letter-spacing:0.170px;text-indent:0.170px">«Філософія і методологія науки: виклики та перспективи міждисциплінарності»</div>
<div class="st" style="left:255px;top:204px;font-size:7.0px;transform:translate(-50%,-50%);letter-spacing:0.331px;text-indent:0.331px">03 грудня 2025 року</div>
<div class="st" style="left:255px;top:260.4px;font-size:7.0px;transform:translate(-50%,-50%);letter-spacing:0.232px;text-indent:0.232px">Чернігів - 2025</div>
</div></div>
<div class="t" style="left:5.5px;top:79px;font-size:6px;color:#c8583c">1</div>
<div class="a" style="left:13px;top:137px;width:83px;height:47px;background:#fbf9f8;overflow:hidden">
<div class="a" style="left:22.700000000000003px;top:4px;width:38.5px;height:27px;background:#2a3e86;overflow:hidden">
<div class="a" style="left:4px;top:2.5px;width:30px;height:2px;background:rgba(220,230,255,0.45)"></div><div class="a" style="left:1px;top:7.5px;width:36px;height:2.2px;background:rgba(220,230,255,0.45)"></div>
<div class="a" style="left:16px;top:7px;width:6px;height:7px;border-radius:50%;background:#7a6a60"></div><div class="a" style="left:12px;top:13px;width:14px;height:14px;border-radius:5px 5px 0 0;background:#151a26"></div>
</div>
<svg class="a" style="left:64.5px;top:0px;overflow:visible" width="19" height="47" viewBox="0 0 19 47" preserveAspectRatio="none"><g fill="none" stroke-linecap="round" transform="translate(-4.5,0) skewX(12)">
<path d="M15.0 2 L4.0 2 M16.4 5 L2.6 5 M16.2 8 L2.8 8 M14.6 11 L4.4 11 M11.9 14 L7.1 14 M8.6 17 L10.4 17 M5.5 20 L13.5 20 M3.4 23 L15.6 23 M2.5 26 L16.5 26 M3.2 29 L15.8 29 M5.2 32 L13.8 32 M8.2 35 L10.8 35 M11.5 38 L7.5 38 M14.3 41 L4.7 41 M16.1 44 L2.9 44" stroke="#cdd3f0" stroke-width="0.9"/>
<path d="M13.5 0 L14.3 1 L15.0 2 L15.6 3 L16.1 4 L16.4 5 L16.5 6 L16.4 7 L16.2 8 L15.8 9 L15.3 10 L14.6 11 L13.8 12 L12.9 13 L11.9 14 L10.8 15 L9.7 16 L8.6 17 L7.5 18 L6.5 19 L5.5 20 L4.7 21 L4.0 22 L3.4 23 L2.9 24 L2.6 25 L2.5 26 L2.6 27 L2.8 28 L3.2 29 L3.7 30 L4.4 31 L5.2 32 L6.1 33 L7.1 34 L8.2 35 L9.3 36 L10.4 37 L11.5 38 L12.5 39 L13.5 40 L14.3 41 L15.0 42 L15.6 43 L16.1 44 L16.4 45 L16.5 46 L16.4 47" stroke="#a3aee2" stroke-width="3"/>
<path d="M5.5 0 L4.7 1 L4.0 2 L3.4 3 L2.9 4 L2.6 5 L2.5 6 L2.6 7 L2.8 8 L3.2 9 L3.7 10 L4.4 11 L5.2 12 L6.1 13 L7.1 14 L8.2 15 L9.3 16 L10.4 17 L11.5 18 L12.5 19 L13.5 20 L14.3 21 L15.0 22 L15.6 23 L16.1 24 L16.4 25 L16.5 26 L16.4 27 L16.2 28 L15.8 29 L15.3 30 L14.6 31 L13.8 32 L12.9 33 L11.9 34 L10.8 35 L9.7 36 L8.6 37 L7.5 38 L6.5 39 L5.5 40 L4.7 41 L4.0 42 L3.4 43 L2.9 44 L2.6 45 L2.5 46 L2.6 47" stroke="#95a1dc" stroke-width="3"/>
</g></svg>
<div class="a" style="left:21px;top:35.5px;width:43px;height:0.9px;background:#888"></div>
<div class="a" style="left:28px;top:38px;width:29px;height:0.7px;background:#b8b8b8"></div>
<div class="a" style="left:29px;top:40.5px;width:24px;height:0.7px;background:#888"></div>
<div class="a" style="left:35px;top:43.5px;width:15px;height:0.7px;background:#a8a8a8"></div>
</div>
<div class="t" style="left:5.5px;top:138.5px;font-size:6px;color:#555">2</div>
<div class="a" style="left:13px;top:194.6px;width:83px;height:47px;background:#fbf9f8;overflow:hidden">
<div class="a" style="left:32px;top:3.0px;width:19px;height:28.900000000000006px;background:#9a9a9a;overflow:hidden">
<div class="a" style="left:0;top:0;width:100%;height:100%;background:linear-gradient(#d6d0ca,#c9c2bb)"></div><div class="a" style="left:6.5px;top:7px;width:6px;height:7px;border-radius:50%;background:#c49a86"></div><div class="a" style="left:2px;top:13.5px;width:15px;height:12px;border-radius:6px 6px 0 0;background:#b4c0d2"></div><div class="a" style="left:0;top:23px;width:19px;height:6px;background:#8d4f3f"></div>
</div>
<svg class="a" style="left:64.5px;top:0px;overflow:visible" width="19" height="47" viewBox="0 0 19 47" preserveAspectRatio="none"><g fill="none" stroke-linecap="round" transform="translate(-4.5,0) skewX(12)">
<path d="M15.0 2 L4.0 2 M16.4 5 L2.6 5 M16.2 8 L2.8 8 M14.6 11 L4.4 11 M11.9 14 L7.1 14 M8.6 17 L10.4 17 M5.5 20 L13.5 20 M3.4 23 L15.6 23 M2.5 26 L16.5 26 M3.2 29 L15.8 29 M5.2 32 L13.8 32 M8.2 35 L10.8 35 M11.5 38 L7.5 38 M14.3 41 L4.7 41 M16.1 44 L2.9 44" stroke="#cdd3f0" stroke-width="0.9"/>
<path d="M13.5 0 L14.3 1 L15.0 2 L15.6 3 L16.1 4 L16.4 5 L16.5 6 L16.4 7 L16.2 8 L15.8 9 L15.3 10 L14.6 11 L13.8 12 L12.9 13 L11.9 14 L10.8 15 L9.7 16 L8.6 17 L7.5 18 L6.5 19 L5.5 20 L4.7 21 L4.0 22 L3.4 23 L2.9 24 L2.6 25 L2.5 26 L2.6 27 L2.8 28 L3.2 29 L3.7 30 L4.4 31 L5.2 32 L6.1 33 L7.1 34 L8.2 35 L9.3 36 L10.4 37 L11.5 38 L12.5 39 L13.5 40 L14.3 41 L15.0 42 L15.6 43 L16.1 44 L16.4 45 L16.5 46 L16.4 47" stroke="#a3aee2" stroke-width="3"/>
<path d="M5.5 0 L4.7 1 L4.0 2 L3.4 3 L2.9 4 L2.6 5 L2.5 6 L2.6 7 L2.8 8 L3.2 9 L3.7 10 L4.4 11 L5.2 12 L6.1 13 L7.1 14 L8.2 15 L9.3 16 L10.4 17 L11.5 18 L12.5 19 L13.5 20 L14.3 21 L15.0 22 L15.6 23 L16.1 24 L16.4 25 L16.5 26 L16.4 27 L16.2 28 L15.8 29 L15.3 30 L14.6 31 L13.8 32 L12.9 33 L11.9 34 L10.8 35 L9.7 36 L8.6 37 L7.5 38 L6.5 39 L5.5 40 L4.7 41 L4.0 42 L3.4 43 L2.9 44 L2.6 45 L2.5 46 L2.6 47" stroke="#95a1dc" stroke-width="3"/>
</g></svg>
<div class="a" style="left:18.0px;top:34.4px;width:50.0px;height:0.8px;background:#a0a0a0"></div>
<div class="a" style="left:33.0px;top:37.4px;width:20.0px;height:0.7px;background:#b0b0b0"></div>
<div class="a" style="left:28.0px;top:40.4px;width:30.0px;height:0.7px;background:#a8a8a8"></div>
<div class="a" style="left:33.0px;top:42.9px;width:19.0px;height:0.8px;background:#999"></div>
<div class="a" style="left:36.0px;top:46.4px;width:14.0px;height:0.9px;background:#888"></div>
</div>
<div class="t" style="left:5.5px;top:196.1px;font-size:6px;color:#555">3</div>
<div class="a" style="left:13px;top:251.8px;width:83px;height:47px;background:#fbf9f8;overflow:hidden">
<div class="a" style="left:31.4px;top:5.599999999999966px;width:18.6px;height:23.600000000000023px;background:#3a4a78;overflow:hidden">
<div class="a" style="left:0;top:0;width:100%;height:100%;background:linear-gradient(#28304f,#3b4566)"></div><div class="a" style="left:5px;top:3px;width:9px;height:12px;border-radius:50%;background:#231816"></div><div class="a" style="left:7px;top:6px;width:5px;height:6px;border-radius:50%;background:#d8b0a0"></div><div class="a" style="left:3px;top:13px;width:13px;height:12px;border-radius:5px 5px 0 0;background:#101010"></div><div class="a" style="left:8.5px;top:13px;width:2px;height:8px;background:#eee"></div>
</div>
<svg class="a" style="left:64.5px;top:0px;overflow:visible" width="19" height="47" viewBox="0 0 19 47" preserveAspectRatio="none"><g fill="none" stroke-linecap="round" transform="translate(-4.5,0) skewX(12)">
<path d="M15.0 2 L4.0 2 M16.4 5 L2.6 5 M16.2 8 L2.8 8 M14.6 11 L4.4 11 M11.9 14 L7.1 14 M8.6 17 L10.4 17 M5.5 20 L13.5 20 M3.4 23 L15.6 23 M2.5 26 L16.5 26 M3.2 29 L15.8 29 M5.2 32 L13.8 32 M8.2 35 L10.8 35 M11.5 38 L7.5 38 M14.3 41 L4.7 41 M16.1 44 L2.9 44" stroke="#cdd3f0" stroke-width="0.9"/>
<path d="M13.5 0 L14.3 1 L15.0 2 L15.6 3 L16.1 4 L16.4 5 L16.5 6 L16.4 7 L16.2 8 L15.8 9 L15.3 10 L14.6 11 L13.8 12 L12.9 13 L11.9 14 L10.8 15 L9.7 16 L8.6 17 L7.5 18 L6.5 19 L5.5 20 L4.7 21 L4.0 22 L3.4 23 L2.9 24 L2.6 25 L2.5 26 L2.6 27 L2.8 28 L3.2 29 L3.7 30 L4.4 31 L5.2 32 L6.1 33 L7.1 34 L8.2 35 L9.3 36 L10.4 37 L11.5 38 L12.5 39 L13.5 40 L14.3 41 L15.0 42 L15.6 43 L16.1 44 L16.4 45 L16.5 46 L16.4 47" stroke="#a3aee2" stroke-width="3"/>
<path d="M5.5 0 L4.7 1 L4.0 2 L3.4 3 L2.9 4 L2.6 5 L2.5 6 L2.6 7 L2.8 8 L3.2 9 L3.7 10 L4.4 11 L5.2 12 L6.1 13 L7.1 14 L8.2 15 L9.3 16 L10.4 17 L11.5 18 L12.5 19 L13.5 20 L14.3 21 L15.0 22 L15.6 23 L16.1 24 L16.4 25 L16.5 26 L16.4 27 L16.2 28 L15.8 29 L15.3 30 L14.6 31 L13.8 32 L12.9 33 L11.9 34 L10.8 35 L9.7 36 L8.6 37 L7.5 38 L6.5 39 L5.5 40 L4.7 41 L4.0 42 L3.4 43 L2.9 44 L2.6 45 L2.5 46 L2.6 47" stroke="#95a1dc" stroke-width="3"/>
</g></svg>
<div class="a" style="left:3.7px;top:33.5px;width:78.3px;height:0.8px;background:#9a9a9a"></div>
<div class="a" style="left:16.0px;top:37.2px;width:54.6px;height:0.8px;background:#888"></div>
<div class="a" style="left:34.0px;top:40.7px;width:19.5px;height:0.8px;background:#888"></div>
<div class="a" style="left:37.0px;top:44.2px;width:12.6px;height:0.7px;background:#aaa"></div>
</div>
<div class="t" style="left:5.5px;top:253.3px;font-size:6px;color:#555">4</div>
<div class="a" style="left:13px;top:309px;width:83px;height:47px;background:#fbf9f8;overflow:hidden">
<div class="a" style="left:31px;top:5px;width:19px;height:22.5px;background:#e9d9a8;overflow:hidden">
<div class="a" style="left:0;top:0;width:100%;height:100%;background:linear-gradient(#efe7c8,#e8d9a0)"></div><div class="a" style="left:5px;top:3px;width:10px;height:14px;border-radius:50%;background:#8a5b34"></div><div class="a" style="left:7px;top:6px;width:6px;height:7px;border-radius:50%;background:#e6bca0"></div><div class="a" style="left:2px;top:15px;width:15px;height:10px;border-radius:6px 6px 0 0;background:#f0df9a"></div>
</div>
<svg class="a" style="left:64.5px;top:0px;overflow:visible" width="19" height="47" viewBox="0 0 19 47" preserveAspectRatio="none"><g fill="none" stroke-linecap="round" transform="translate(-4.5,0) skewX(12)">
<path d="M15.0 2 L4.0 2 M16.4 5 L2.6 5 M16.2 8 L2.8 8 M14.6 11 L4.4 11 M11.9 14 L7.1 14 M8.6 17 L10.4 17 M5.5 20 L13.5 20 M3.4 23 L15.6 23 M2.5 26 L16.5 26 M3.2 29 L15.8 29 M5.2 32 L13.8 32 M8.2 35 L10.8 35 M11.5 38 L7.5 38 M14.3 41 L4.7 41 M16.1 44 L2.9 44" stroke="#cdd3f0" stroke-width="0.9"/>
<path d="M13.5 0 L14.3 1 L15.0 2 L15.6 3 L16.1 4 L16.4 5 L16.5 6 L16.4 7 L16.2 8 L15.8 9 L15.3 10 L14.6 11 L13.8 12 L12.9 13 L11.9 14 L10.8 15 L9.7 16 L8.6 17 L7.5 18 L6.5 19 L5.5 20 L4.7 21 L4.0 22 L3.4 23 L2.9 24 L2.6 25 L2.5 26 L2.6 27 L2.8 28 L3.2 29 L3.7 30 L4.4 31 L5.2 32 L6.1 33 L7.1 34 L8.2 35 L9.3 36 L10.4 37 L11.5 38 L12.5 39 L13.5 40 L14.3 41 L15.0 42 L15.6 43 L16.1 44 L16.4 45 L16.5 46 L16.4 47" stroke="#a3aee2" stroke-width="3"/>
<path d="M5.5 0 L4.7 1 L4.0 2 L3.4 3 L2.9 4 L2.6 5 L2.5 6 L2.6 7 L2.8 8 L3.2 9 L3.7 10 L4.4 11 L5.2 12 L6.1 13 L7.1 14 L8.2 15 L9.3 16 L10.4 17 L11.5 18 L12.5 19 L13.5 20 L14.3 21 L15.0 22 L15.6 23 L16.1 24 L16.4 25 L16.5 26 L16.4 27 L16.2 28 L15.8 29 L15.3 30 L14.6 31 L13.8 32 L12.9 33 L11.9 34 L10.8 35 L9.7 36 L8.6 37 L7.5 38 L6.5 39 L5.5 40 L4.7 41 L4.0 42 L3.4 43 L2.9 44 L2.6 45 L2.5 46 L2.6 47" stroke="#95a1dc" stroke-width="3"/>
</g></svg>
<div class="a" style="left:3.7px;top:33.7px;width:76.3px;height:0.9px;background:#777"></div>
<div class="a" style="left:18.0px;top:37.5px;width:49.8px;height:0.7px;background:#aaa"></div>
<div class="a" style="left:34.0px;top:40.5px;width:19.0px;height:0.7px;background:#999"></div>
<div class="a" style="left:37.0px;top:44.0px;width:13.0px;height:0.8px;background:#888"></div>
</div>
<div class="t" style="left:5.5px;top:310.5px;font-size:6px;color:#555">5</div>
<div class="a" style="left:13px;top:365px;width:83px;height:24px;background:#fbf9f8;overflow:hidden">
<div class="a" style="left:30px;top:3px;width:21px;height:21px;background:#2e3f6e;overflow:hidden">
<div class="a" style="left:0;top:0;width:100%;height:100%;background:linear-gradient(#27386a,#344a7a)"></div><div class="a" style="left:7px;top:4px;width:7px;height:9px;border-radius:50%;background:#c9a48a"></div><div class="a" style="left:3px;top:12px;width:15px;height:12px;border-radius:6px 6px 0 0;background:#3e4a2a"></div>
</div>
<svg class="a" style="left:64.5px;top:0px;overflow:visible" width="19" height="47" viewBox="0 0 19 47" preserveAspectRatio="none"><g fill="none" stroke-linecap="round" transform="translate(-4.5,0) skewX(12)">
<path d="M15.0 2 L4.0 2 M16.4 5 L2.6 5 M16.2 8 L2.8 8 M14.6 11 L4.4 11 M11.9 14 L7.1 14 M8.6 17 L10.4 17 M5.5 20 L13.5 20 M3.4 23 L15.6 23 M2.5 26 L16.5 26 M3.2 29 L15.8 29 M5.2 32 L13.8 32 M8.2 35 L10.8 35 M11.5 38 L7.5 38 M14.3 41 L4.7 41 M16.1 44 L2.9 44" stroke="#cdd3f0" stroke-width="0.9"/>
<path d="M13.5 0 L14.3 1 L15.0 2 L15.6 3 L16.1 4 L16.4 5 L16.5 6 L16.4 7 L16.2 8 L15.8 9 L15.3 10 L14.6 11 L13.8 12 L12.9 13 L11.9 14 L10.8 15 L9.7 16 L8.6 17 L7.5 18 L6.5 19 L5.5 20 L4.7 21 L4.0 22 L3.4 23 L2.9 24 L2.6 25 L2.5 26 L2.6 27 L2.8 28 L3.2 29 L3.7 30 L4.4 31 L5.2 32 L6.1 33 L7.1 34 L8.2 35 L9.3 36 L10.4 37 L11.5 38 L12.5 39 L13.5 40 L14.3 41 L15.0 42 L15.6 43 L16.1 44 L16.4 45 L16.5 46 L16.4 47" stroke="#a3aee2" stroke-width="3"/>
<path d="M5.5 0 L4.7 1 L4.0 2 L3.4 3 L2.9 4 L2.6 5 L2.5 6 L2.6 7 L2.8 8 L3.2 9 L3.7 10 L4.4 11 L5.2 12 L6.1 13 L7.1 14 L8.2 15 L9.3 16 L10.4 17 L11.5 18 L12.5 19 L13.5 20 L14.3 21 L15.0 22 L15.6 23 L16.1 24 L16.4 25 L16.5 26 L16.4 27 L16.2 28 L15.8 29 L15.3 30 L14.6 31 L13.8 32 L12.9 33 L11.9 34 L10.8 35 L9.7 36 L8.6 37 L7.5 38 L6.5 39 L5.5 40 L4.7 41 L4.0 42 L3.4 43 L2.9 44 L2.6 45 L2.5 46 L2.6 47" stroke="#95a1dc" stroke-width="3"/>
</g></svg>
</div>
<div class="t" style="left:5.5px;top:366.5px;font-size:6px;color:#555">6</div>
<div class="a" style="left:107px;top:72.5px;width:6.5px;height:316.5px;background:#dcdcdc"></div>
<div class="a" style="left:107px;top:80px;width:6.5px;height:270px;background:#fff"></div>
<div class="a" style="left:107px;top:72.5px;width:6.5px;height:7px;background:#fff"></div>
<div class="t" style="left:108.3px;top:73.5px;font-size:4px;color:#555">▲</div>
<div class="a" style="left:107px;top:382px;width:6.5px;height:7px;background:#fff"></div>
<div class="t" style="left:108.3px;top:383.5px;font-size:4px;color:#555">▼</div>
<div class="a" style="left:115px;top:70px;width:1px;height:319px;background:#d0d0d0"></div>
<div class="a" style="left:728.8px;top:72.5px;width:7.2px;height:298px;background:#dedede"></div>
<div class="a" style="left:728.8px;top:74px;width:7.2px;height:7px;background:#fff"></div>
<div class="t" style="left:730.5px;top:75px;font-size:4px;color:#555">▲</div>
<div class="a" style="left:729.5px;top:114.5px;width:6px;height:35px;background:#fff"></div>
<div class="a" style="left:729.5px;top:335px;width:6px;height:6px;background:#fff"></div><div class="t" style="left:730.8px;top:336px;font-size:4px;color:#555">▼</div><div class="t" style="left:730.5px;top:346px;font-size:4.5px;color:#555;line-height:1.6">⊼<br>⊻</div>
<div class="a" style="left:116px;top:371px;width:620px;height:1px;background:#d2d2d2"></div>
<div class="a" style="left:116px;top:372px;width:620px;height:17px;background:#e6e6e6"></div>
<div class="t" style="left:122px;top:375.5px;font-size:6.7px;color:#6a6a6a">Заметки к слайду</div>
  <div id="slide" class="a">
<svg class="a" style="left:0;top:0;overflow:visible" width="514" height="287" viewBox="0 0 514 287">
 <defs>
  <radialGradient id="bg1" cx="0.46" cy="0.44" r="0.56">
   <stop offset="0" stop-color="#e2dbf8"/><stop offset="0.6" stop-color="#d8cff5"/><stop offset="0.86" stop-color="#cdc2f2"/><stop offset="0.94" stop-color="#e0d9f8"/><stop offset="1" stop-color="#efebfc"/>
  </radialGradient>
  <radialGradient id="bg2" cx="0.5" cy="0.5" r="0.5">
   <stop offset="0" stop-color="#dcd4f6"/><stop offset="0.68" stop-color="#d6cdf4"/><stop offset="0.72" stop-color="#e9e4fa"/><stop offset="0.77" stop-color="#d9d0f5"/><stop offset="0.88" stop-color="#e3dcf8"/><stop offset="0.96" stop-color="#ece7fb"/><stop offset="1" stop-color="#d8cff5"/>
  </radialGradient>
  <filter id="sb" x="-10%" y="-10%" width="120%" height="120%"><feGaussianBlur stdDeviation="0.6"/></filter>
  <filter id="sb2" x="-20%" y="-20%" width="140%" height="140%"><feGaussianBlur stdDeviation="2"/></filter>
 </defs>
 <g filter="url(#sb)">
 <circle cx="361.5" cy="145" r="83.5" fill="url(#bg2)"/>
 <path d="M282 170 Q300 222 362 228 Q420 226 440 180" stroke="#c6b9ef" stroke-width="5" fill="none" opacity="0.6" filter="url(#sb2)"/>
 <circle cx="370" cy="148" r="60" fill="none" stroke="#cdc2f2" stroke-width="3" opacity="0.6"/>
 <circle cx="370" cy="148" r="57" fill="#d4caf4" stroke="#f0ecfc" stroke-width="1.8"/>
 <path d="M300 110 Q312 76 348 66" stroke="#f2eefc" stroke-width="3" fill="none" opacity="0.9"/>
 <path d="M322 120 Q330 100 350 95" stroke="#e6e0fa" stroke-width="2" fill="none" opacity="0.7"/>
 <g stroke="#a596df" stroke-width="0.6" fill="none"><path d="M337 144 L370 122 L395 138 L377 162 L351 166 Z"/></g>
 <g fill="#ddd5f7" stroke="#ad9fe6" stroke-width="0.9"><circle cx="370" cy="122" r="7"/><circle cx="395" cy="138" r="6.5"/><circle cx="337" cy="144" r="7"/><circle cx="377" cy="162" r="6"/><circle cx="351" cy="166" r="4"/></g>
 <g fill="#f3f0fd" opacity="0.9"><circle cx="368" cy="119.5" r="2.2"/><circle cx="393" cy="135.5" r="2"/><circle cx="335" cy="141.5" r="2.2"/><circle cx="375" cy="160" r="1.8"/></g>
 <circle cx="296" cy="98" r="25" fill="url(#bg1)" opacity="0.75"/>
 <circle cx="466" cy="85" r="33" fill="url(#bg1)"/>
 <circle cx="466" cy="88" r="22" fill="none" stroke="#ebe6fb" stroke-width="1.2"/>
 <circle cx="462" cy="206" r="24" fill="url(#bg1)"/>
 <circle cx="470" cy="215" r="6" fill="#d6cdf4" stroke="#ebe6fb" stroke-width="1"/>
 <circle cx="411" cy="229" r="16.5" fill="url(#bg1)" opacity="0.9"/>
 <circle cx="286" cy="253" r="40" fill="url(#bg1)"/>
 <circle cx="290" cy="255" r="31" fill="none" stroke="#e8e2fa" stroke-width="1.2" opacity="0.8"/>
 <circle cx="295" cy="240" r="7" fill="#cbc0f1" stroke="#e3dcf8" stroke-width="0.8"/>
 </g>
</svg>

<svg class="a" style="left:360px;top:-7px" width="14" height="70" viewBox="0 0 14 70"><defs><linearGradient id="pip" x1="0" x2="1"><stop offset="0" stop-color="#c5b8ef"/><stop offset="0.45" stop-color="#e4defa"/><stop offset="1" stop-color="#c0b2ed"/></linearGradient></defs><path d="M1 0 L12.6 0 L12.2 26 Q11 44 8.5 61 L5 61 Q2.6 44 1.4 26 Z" fill="url(#pip)"/><path d="M5 60 Q3.5 64 6.8 66.5 Q10 64 8.5 60 Z" fill="#cfc4f2" stroke="#a99ce0" stroke-width="0.5"/></svg>
<div class="a" style="left:373px;top:0;width:141px;height:83.5px;background:#fdfdfd"></div>
<svg class="a" style="left:395px;top:12px" width="100" height="60" viewBox="0 0 100 60">
 <g fill="none" stroke="#456592" stroke-width="0.9">
  <path d="M7.4 35 L7.4 23.6 L31.7 23.6 L31.7 26.5 L38.5 26.5 L38.5 4 L48 4 L48 6 L61 6 L61 19"/>
 </g>
 <rect x="48" y="6" width="11" height="13.3" fill="#d4e3f3" stroke="#456592" stroke-width="0.7"/>
 <g stroke="#5a86b8" stroke-width="0.8"><path d="M49.5 9 L57.5 9 M49.5 11.8 L57.5 11.8 M49.5 14.6 L57.5 14.6 M49.5 17.2 L57.5 17.2"/></g>
 <path d="M42.5 8 L42.5 13 M41 9 L41 12 L44 12 L44 9" stroke="#3b6fb0" stroke-width="0.6" fill="none"/>
 <g fill="#1c4a8a">
  <path d="M1 36.5 Q20 30 39 42.5 L37.5 43.5 Q20 38 0.5 41 Z"/>
  <path d="M73 9.5 L80 15.5 Q62 27 48.5 41 L47 40 Q58 23 73 9.5 Z"/>
  <path d="M81.5 18.5 L85.5 24.5 Q66 30 50.5 41.5 L49.5 40.5 Q63 27 81.5 18.5 Z"/>
  <path d="M87.5 27.5 L90 33.5 Q70 34 52.5 42.5 L52 41.5 Q68 31 87.5 27.5 Z"/>
  <path d="M93 36.5 L94.5 42.5 Q74 40 54 44 L54 43 Q72 37 93 36.5 Z"/>
  <path d="M40 43.5 A6 6 0 0 1 52 43.5 Z"/>
  <path d="M41 39 L40 37.5 M46 36.8 L46 35 M51 39 L52 37.5 M43.5 37.5 L43 36 M48.5 37.5 L49 36" stroke="#1c4a8a" stroke-width="1.3"/>
 </g>
 <text x="50" y="49.2" text-anchor="middle" font-family="Liberation Sans" font-weight="bold" font-size="5.6" fill="#1f4682" stroke="#1f4682" stroke-width="0.15" textLength="91" lengthAdjust="spacingAndGlyphs">НАЦІОНАЛЬНИЙ УНІВЕРСИТЕТ</text>
 <text x="50" y="55.3" text-anchor="middle" font-family="Liberation Sans" font-weight="bold" font-size="5.6" fill="#1f4682" stroke="#1f4682" stroke-width="0.15" textLength="92" lengthAdjust="spacingAndGlyphs">«ЧЕРНІГІВСЬКА ПОЛІТЕХНІКА»</text>
</svg>
<svg class="a" style="left:1px;top:0px" width="96" height="96" viewBox="-48 -48 96 96">
 <defs><path id="arcT" d="M-34.6 12.6 A36.8 36.8 0 1 1 34.6 12.6"/><path id="arcB" d="M-39.6 10.6 A41 41 0 0 0 39.6 10.6"/></defs>
 <circle r="46.8" fill="#dcd6ef"/>
 <circle r="45" fill="#1f2450"/>
 <circle r="33" fill="none" stroke="#d6d6e6" stroke-width="0.8"/>
 <text font-family="Liberation Serif" font-size="7" fill="#e8e8f0" font-weight="bold" letter-spacing="0.1"><textPath href="#arcT" startOffset="50%" text-anchor="middle" textLength="128" lengthAdjust="spacingAndGlyphs">ПЕНІТЕНЦІАРНА АКАДЕМІЯ УКРАЇНИ</textPath></text>
 <text font-family="Liberation Serif" font-size="5.6" fill="#e8e8f0" letter-spacing="0"><textPath href="#arcB" startOffset="50%" text-anchor="middle" textLength="92" lengthAdjust="spacingAndGlyphs">PENITENTIARY ACADEMY OF UKRAINE</textPath></text>
 <path d="M-27 -24 Q0 -31 27 -24 L27 4 Q25 25 0 34 Q-25 25 -27 4 Z" fill="#1f2450" stroke="#d8d8e8" stroke-width="0.9"/>
 <path d="M0 -29 L0 34" stroke="#d8d8e8" stroke-width="0.8"/>
 <g transform="translate(-14,-9)">
  <path d="M-4 -12 L4 -12 L3 -4 L12 -4 L12 4 L3 4 L4 12 L-4 12 L-3 4 L-12 4 L-12 -4 L-3 -4 Z" fill="#e6e6ee"/>
  <path d="M-2.8 -10.5 L2.8 -10.5 L2 -2 L10.5 -2.8 L10.5 2.8 L2 2 L2.8 10.5 L-2.8 10.5 L-2 2 L-10.5 2.8 L-10.5 -2.8 L-2 -2 Z" fill="#b32a5c"/>
  <path d="M-11 -11 L-6 -11 L-11 -6 Z M11 -11 L6 -11 L11 -6 Z M-11 11 L-6 11 L-11 6 Z M11 11 L6 11 L11 6 Z" fill="#d8d8e4"/>
  <circle r="4.3" fill="#4f8fd0" stroke="#e6e6ee" stroke-width="0.9"/>
  <path d="M-1.4 -2 L0 2 L1.4 -2" stroke="#e2c24a" stroke-width="0.7" fill="none"/>
 </g>
 <text x="-12" y="18" text-anchor="middle" font-family="Liberation Serif" font-style="italic" font-size="8.5" fill="#e8e8f0">1978</text>
 <path d="M5 -17 Q3 -22 6 -24 Q9 -21 12 -21 Q15 -21 18 -24 Q21 -22 19 -17 Q24 -7 20 5 L7 5 Q2 -6 5 -17 Z" fill="#e8e8ee"/>
 <path d="M12 -10 Q17 -5 16 3" stroke="#b8b8c8" stroke-width="0.8" fill="none"/>
 <circle cx="8.8" cy="-17" r="1.3" fill="#1f2450"/><circle cx="15.2" cy="-17" r="1.3" fill="#1f2450"/>
 <path d="M2 8 Q7 6 12 8 Q17 6 22 8 L22 18 Q17 16 12 18 Q7 16 2 18 Z" fill="#e0e0e8"/>
 <path d="M12 8 L12 18" stroke="#1f2450" stroke-width="0.6"/>
</svg>
<div class="st" style="left:255px;top:33px;font-size:7.0px;transform:translate(-50%,-50%);letter-spacing:0.481px;text-indent:0.481px">МІНІСТЕРСТВО ЮСТИЦІЇ УКРАЇНИ</div>
<div class="st" style="left:255px;top:44.3px;font-size:7.0px;transform:translate(-50%,-50%);letter-spacing:0.322px;text-indent:0.322px">ПЕНІТЕНЦІАРНА АКАДЕМІЯ УКРАЇНИ</div>
<div class="st" style="left:255px;top:56px;font-size:7.0px;transform:translate(-50%,-50%);letter-spacing:0.206px;text-indent:0.206px">Кафедра педагогіки та професійної етики</div>
<div class="st" style="left:255px;top:78px;font-size:7.0px;transform:translate(-50%,-50%);letter-spacing:0.368px;text-indent:0.368px">МІНІСТЕРСТВО ОСВІТИ І НАУКИ</div>
<div class="st" style="left:255px;top:90px;font-size:7.0px;transform:translate(-50%,-50%);letter-spacing:0.170px;text-indent:0.170px">Національний університет «Чернігівська політехніка»</div>
<div class="st" style="left:255px;top:101.7px;font-size:7.0px;transform:translate(-50%,-50%);letter-spacing:0.080px;text-indent:0.080px">Кафедра філософії і суспільних наук</div>
<div class="st" style="left:255px;top:147px;font-size:7.0px;transform:translate(-50%,-50%);letter-spacing:0.150px;text-indent:0.150px">Круглий стіл</div>
<div class="st" style="left:255px;top:169px;font-size:7.0px;transform:translate(-50%,-50%);letter-spacing:0.170px;text-indent:0.170px">«Філософія і методологія науки: виклики та перспективи міждисциплінарності»</div>
<div class="st" style="left:255px;top:204px;font-size:7.0px;transform:translate(-50%,-50%);letter-spacing:0.331px;text-indent:0.331px">03 грудня 2025 року</div>
<div class="st" style="left:255px;top:260.4px;font-size:7.0px;transform:translate(-50%,-50%);letter-spacing:0.232px;text-indent:0.232px">Чернігів - 2025</div>
</div>
  <div id="status" class="a">
<div class="t" style="left:2.5px;top:3px;font-size:5.2px;color:#555">Слайд 1 из 6</div>
<svg class="a" style="left:37px;top:2px" width="9" height="8" viewBox="0 0 9 8"><g fill="none" stroke="#666" stroke-width="0.7"><rect x="0.5" y="0.5" width="5" height="6"/><path d="M6 2 L8.5 2 L8.5 7.5 L3 7.5"/></g></svg>
<div class="t" style="left:51px;top:3px;font-size:5.4px;color:#555">русский</div>
<div class="t" style="left:503px;top:3.2px;font-size:5.5px;color:#555">≜ Заметки</div>
<div class="a" style="left:537px;top:3.2px;width:6px;height:5px;background:#666"></div>
<div class="t" style="left:545px;top:3.2px;font-size:5.5px;color:#555">Примечания</div>
<div class="a" style="left:582px;top:0;width:15px;height:11px;background:#c8c8c8"></div>
<svg class="a" style="left:584px;top:1.5px" width="110" height="8" viewBox="0 0 110 8"><g fill="none" stroke="#666" stroke-width="0.7"><rect x="3" y="1" width="7" height="5.5"/><path d="M3 3 L5 3 M5 1 L5 6.5"/><rect x="19" y="1" width="7" height="5.5"/><path d="M22.5 1 L22.5 6.5 M19 3.8 L26 3.8"/><rect x="35" y="1" width="7" height="5.5"/><path d="M38.5 1 L38.5 6.5 M35 3.8 L42 3.8"/><path d="M50 1 L56 1 L55 5 L51 5 Z M53 5 L53 7"/><path d="M62 4 L65 4"/><path d="M67 4 L115 4" stroke="#999"/></g></svg>
<div class="a" style="left:664px;top:2px;width:1.5px;height:7px;background:#888"></div>
<div class="t" style="left:700px;top:0.5px;font-size:7.5px;color:#555">+</div>
<div class="t" style="left:711.5px;top:3px;font-size:5.3px;color:#555">38%</div>
<svg class="a" style="left:726px;top:1.5px" width="8" height="8" viewBox="0 0 8 8"><g fill="none" stroke="#777" stroke-width="0.6"><rect x="0.5" y="0.5" width="7" height="7"/><path d="M2 2 L6 6 M2 6 L6 2"/></g></svg>
</div>
</div>

<div id="video" class="a">
<svg class="a" style="left:0;top:0" width="184" height="104" viewBox="0 0 184 104">
 <defs>
  <linearGradient id="wall" x1="0" x2="1" y1="0" y2="0">
   <stop offset="0" stop-color="#7e7e82"/><stop offset="0.18" stop-color="#8c8b8c"/><stop offset="0.2" stop-color="#a3a09d"/><stop offset="0.33" stop-color="#a29f9b"/><stop offset="0.35" stop-color="#8c8a87"/><stop offset="0.43" stop-color="#8f8d8a"/><stop offset="0.46" stop-color="#a19e9a"/><stop offset="0.75" stop-color="#9d9a96"/><stop offset="1" stop-color="#8b8885"/>
  </linearGradient>
  <linearGradient id="hair" x1="0" x2="0" y1="0" y2="1"><stop offset="0" stop-color="#5a4a40"/><stop offset="0.35" stop-color="#9a8470"/><stop offset="1" stop-color="#a89480"/></linearGradient>
  <filter id="bl" x="-20%" y="-20%" width="140%" height="140%"><feGaussianBlur stdDeviation="1.2"/></filter>
  <filter id="bl2" x="-20%" y="-20%" width="140%" height="140%"><feGaussianBlur stdDeviation="0.7"/></filter>
 </defs>
 <rect width="184" height="104" fill="url(#wall)"/>
 <g filter="url(#bl)">
  <path d="M50 104 Q54 80 72 74 L118 74 Q146 80 152 104 Z" fill="#1e1e2c"/>
  <path d="M76 104 Q70 70 73 40 Q74 12 96 11 Q120 12 121 40 Q123 70 126 104 L112 104 Q110 80 108 62 L88 62 Q86 80 88 104 Z" fill="url(#hair)"/>
 </g>
 <g filter="url(#bl2)">
  <path d="M89 60 L105 60 L107 76 Q98 84 88 76 Z" fill="#b9aaa3"/>
  <ellipse cx="95" cy="44" rx="15" ry="21" fill="#cbbab1"/>
  <path d="M77 40 Q76 12 95 11 Q116 12 115 40 Q113 31 111 29 Q104 31 96 27 Q88 31 80 30 Q78 33 77 40 Z" fill="#7a6253"/>
  <path d="M86 29 Q92 24 96 30 Q100 24 108 29" stroke="#8d7563" stroke-width="2" fill="none"/>
  <ellipse cx="85.5" cy="37" rx="3" ry="1.4" fill="#5d5458"/>
  <ellipse cx="104" cy="37" rx="3" ry="1.4" fill="#5d5458"/>
  <path d="M94 40 L93 47 L96 47" stroke="#b09e96" stroke-width="1" fill="none"/>
  <ellipse cx="94.5" cy="54" rx="4.5" ry="2.2" fill="#8c6e6c"/>
  <path d="M77 38 Q75 70 79 104 L86 104 Q83 70 82 44 Z" fill="#9a8574"/>
  <path d="M111 40 Q116 70 113 104 L122 104 Q119 70 115 38 Z" fill="#a08a76"/>
 </g>
</svg>
<div class="a" style="left:0;top:94px;width:71px;height:10px;background:rgba(30,30,34,0.75)"></div>
<svg class="a" style="left:2px;top:95.5px" width="8" height="7" viewBox="0 0 8 7"><g fill="#e8e8e8"><rect x="0" y="5" width="1.3" height="2"/><rect x="2" y="3.5" width="1.3" height="3.5"/><rect x="4" y="2" width="1.3" height="5"/><rect x="6" y="0" width="1.3" height="7"/></g></svg>
<div class="t" style="left:11.5px;top:95.6px;font-size:6.9px;color:#eee">Natalia Oleksivna</div>
</div>
<div class="a" style="left:751px;top:283.5px;width:1px;height:13.5px;background:#8a8a8a"></div><div class="a" style="left:753px;top:283.5px;width:1px;height:13.5px;background:#8a8a8a"></div>
<div class="a" style="left:1008px;top:438px;width:18px;height:50px;border-radius:40% 0 0 45%;background:radial-gradient(circle at 60% 40%,#9b8080 0%,#6e5150 45%,#4a3440 75%,rgba(20,60,140,0) 100%)"></div>
<div class="a" style="left:1012px;top:446px;width:6px;height:4px;border-radius:50%;background:#c7b4b8;opacity:0.8"></div>
<div class="a" style="left:1016px;top:458px;width:5px;height:3px;border-radius:50%;background:#b09a9a;opacity:0.8"></div>
<div id="rstrip" class="a"></div>
<div class="a" style="left:950px;top:0;width:1.5px;height:552px;background:#cfcfcf"></div>
<svg class="a" style="left:950px;top:4px" width="16" height="22" viewBox="0 0 16 22"><path d="M1 3 L9 3 L9 21 L1 21 Z" fill="#e8e8e0"/><path d="M5 5 L13 5 L13 21 L5 21 Z" fill="#f4f4ee" stroke="#c8c8c0" stroke-width="0.5"/><rect x="5" y="5" width="8" height="3" fill="#b8d86a"/><path d="M6.5 10 L11.5 10 M6.5 13 L11.5 13 M6.5 16 L11.5 16" stroke="#bbb" stroke-width="0.6"/></svg>
<svg class="a" style="left:981px;top:3px" width="24" height="23" viewBox="0 0 24 23"><path d="M3 4 L21 4 L19 22 L5 22 Z" fill="#dfe6ee"/><path d="M3 4 Q12 0 21 4" fill="#eef3f8"/><path d="M8 10 L12 8 L15 12 L13 13 M16 15 L13 19 L9 18 M8 16 L7 12" stroke="#1a7fd4" stroke-width="2" fill="none"/></svg>
<div id="word" class="a">
 <svg class="a" style="left:0px;top:4px" width="59" height="9" viewBox="0 0 59 9"><g fill="none" stroke="#777" stroke-width="0.7"><rect x="0" y="1" width="6" height="6"/><path d="M0 3.5 L6 3.5"/><path d="M16 5 L22 5"/><rect x="32" y="1.5" width="6" height="6"/><path d="M48 1.5 L54 7.5 M54 1.5 L48 7.5"/></g></svg>
 <div class="t" style="left:44.5px;top:17.5px;font-size:6.5px;color:#333">Вход</div>
 <div class="a" style="left:0;top:29px;width:59px;height:1px;background:#e0e0e0"></div>
 <div class="a" style="left:0;top:30px;width:59px;height:48px;background:#fafafa"></div>
 <svg class="a" style="left:0;top:31px" width="18" height="16" viewBox="0 0 18 16"><g fill="none" stroke="#2b6cc4" stroke-width="1"><path d="M4 8 Q1 8 1 4 Q1 1 4 1 Q7 1 7 4 Q7 8 4 8 Z"/><path d="M0 14 Q0 10 4 10 L6 10"/><path d="M8 14 L16 14"/></g><circle cx="10.5" cy="11.5" r="0.8" fill="#2b6cc4"/></svg>
 <div class="t" style="left:0;top:51px;font-size:6.5px;color:#444">просить</div>
 <div class="t" style="left:0;top:59px;font-size:6.5px;color:#444">одписи</div>
 <div class="a" style="left:27.5px;top:34px;width:1px;height:42px;background:#e2e2e2"></div>
 <svg class="a" style="left:47px;top:71px" width="7" height="5" viewBox="0 0 7 5"><path d="M1 4 L3.5 1.5 L6 4" stroke="#555" stroke-width="0.9" fill="none"/></svg>
 <div class="a" style="left:0;top:78px;width:59px;height:1px;background:#dcdcdc"></div>
 <div class="a" style="left:0;top:497px;width:59px;height:12px;background:#2b579a"></div>
 <div class="a" style="left:0;top:502.5px;width:21px;height:0.8px;background:#d8e2f0"></div>
 <div class="t" style="left:20.5px;top:498.5px;font-size:8px;color:#fff;font-weight:bold">+</div>
 <div class="t" style="left:31.5px;top:500.5px;font-size:5.5px;color:#e8eef7">130%</div>
</div>
<div class="a" style="left:0;top:0;width:2.5px;height:22px;background:#2b3650"></div>
<div class="a" style="left:2.5px;top:0;width:6px;height:22px;background:#d9e0ea"></div>
<div class="a" style="left:0;top:40px;width:2.5px;height:12px;background:#3d6fb8"></div>
<div class="a" style="left:0;top:68px;width:2.5px;height:12px;background:#888"></div>
<div class="a" style="left:9px;top:48px;width:1px;height:11px;background:#888"></div>
<div class="a" style="left:0;top:520px;width:2.5px;height:33px;background:#1e4f9a"></div>
<div class="a" style="left:10px;top:0;width:1px;height:552px;background:#cfcfcf"></div>
</body></html>
